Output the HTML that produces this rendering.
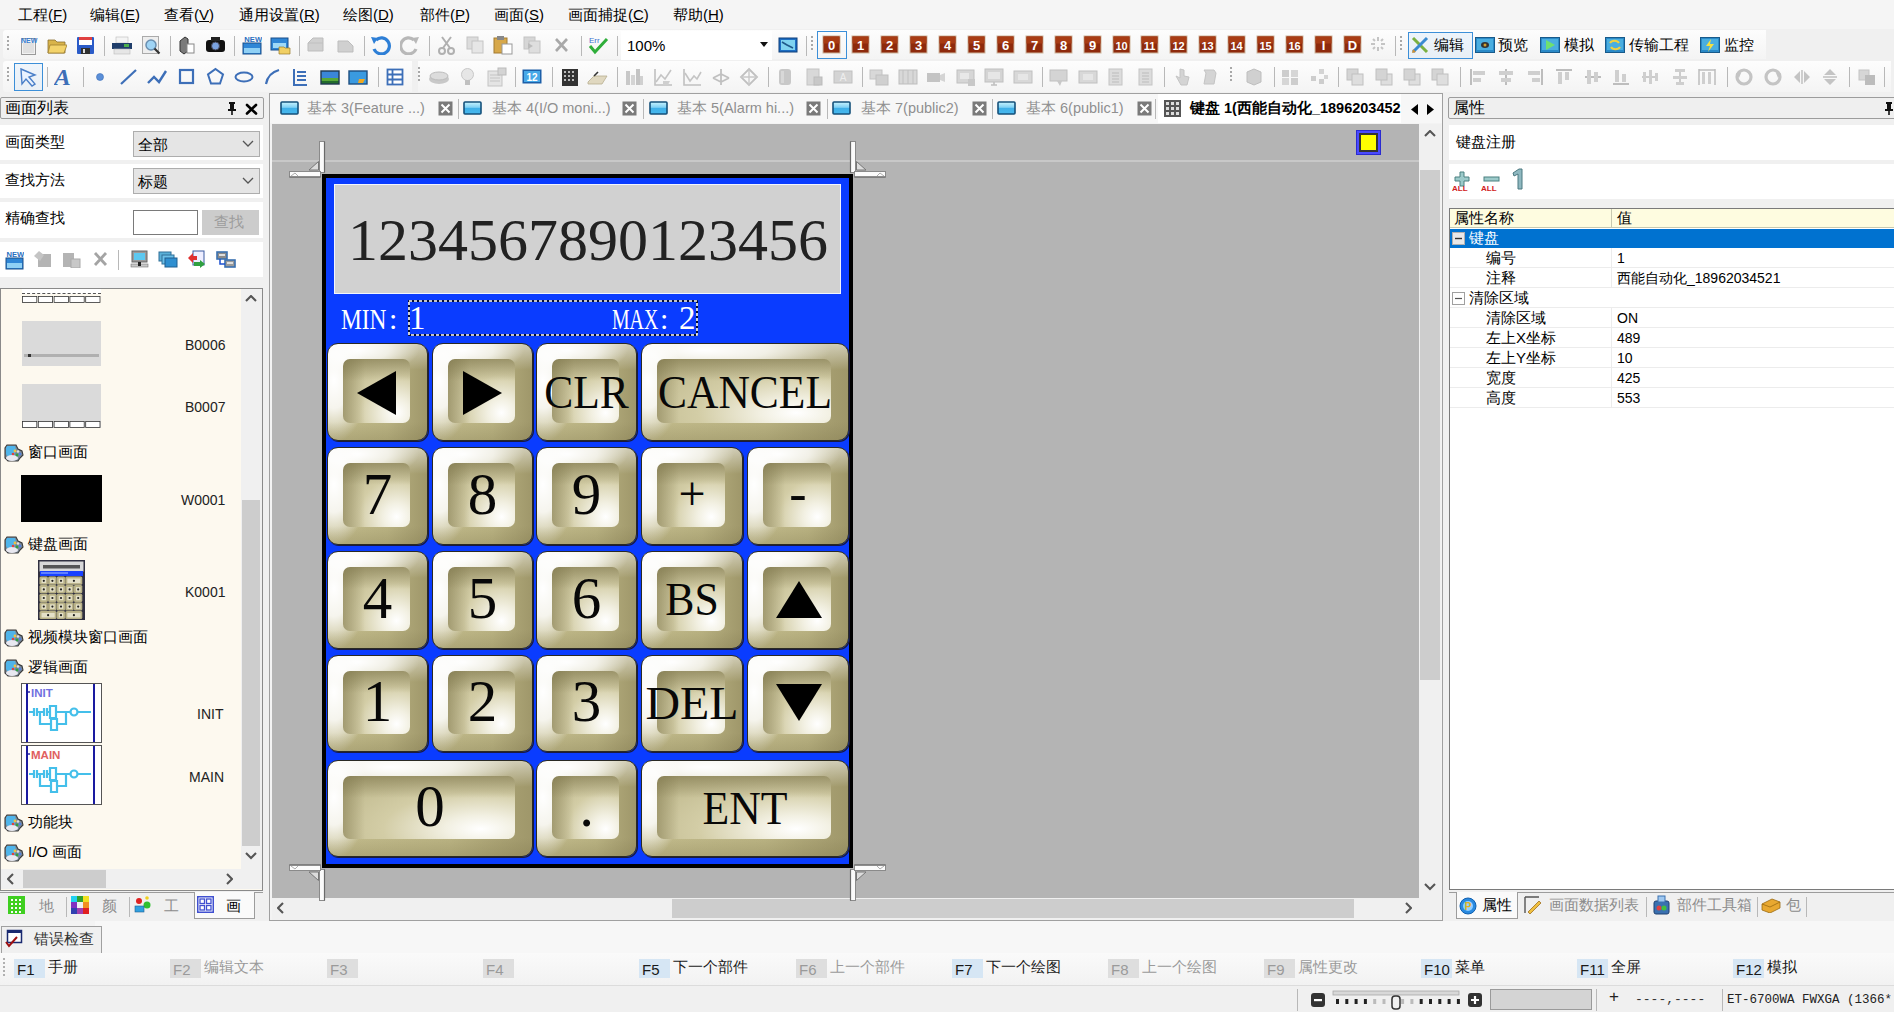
<!DOCTYPE html><html><head><meta charset="utf-8"><title>HMI</title><style>
*{box-sizing:border-box;margin:0;padding:0}
html,body{width:1894px;height:1012px;overflow:hidden;background:#f0f0f0;font-family:"Liberation Sans",sans-serif;color:#000}
.a{position:absolute}
.t{position:absolute;white-space:nowrap;font-size:14px;line-height:16px}
.serif{font-family:"Liberation Serif",serif}
.sep{position:absolute;width:1px;background:#b8b8b8}
.key{position:absolute;border:1.5px solid #2a2a24;border-radius:11px;box-shadow:1px 1px 0 #1a1a40;
 background:linear-gradient(0deg,rgba(110,102,60,.22) 0,rgba(110,102,60,0) 18px),
 radial-gradient(ellipse 34px 62px at 6px 38%,rgba(255,255,255,1) 0%,rgba(255,255,255,.85) 45%,rgba(255,255,255,0) 100%),
 radial-gradient(ellipse 62% 24px at 30% 6px,rgba(255,255,255,1) 0%,rgba(255,255,255,.7) 50%,rgba(255,255,255,0) 100%),
 linear-gradient(180deg,rgba(255,255,255,.5) 0,rgba(255,255,255,0) 26px),
 linear-gradient(90deg,#c2bb8c 0%,#b9b282 60%,#9f976a 100%)}
.key .in{position:absolute;border-radius:7px;
 background:linear-gradient(180deg,rgba(125,117,75,.6) 0,rgba(125,117,75,0) 22px),
 linear-gradient(90deg,rgba(125,117,75,.5) 0,rgba(125,117,75,0) 22px),
 radial-gradient(farthest-corner at 80% 84%,#ffffff 0%,#f2f0e2 18%,#d3cda6 50%,#b8b184 100%)}
.key .lb{position:absolute;left:0;right:0;text-align:center;font-family:"Liberation Serif",serif;color:#080808}
</style></head><body>
<div class="a" style="left:0;top:0;width:1894px;height:29px;background:#f5f5f5"></div>
<div class="t" style="left:18px;top:6px;font-size:15px;line-height:18px">工程(<u>F</u>)</div>
<div class="t" style="left:90px;top:6px;font-size:15px;line-height:18px">编辑(<u>E</u>)</div>
<div class="t" style="left:164px;top:6px;font-size:15px;line-height:18px">查看(<u>V</u>)</div>
<div class="t" style="left:239px;top:6px;font-size:15px;line-height:18px">通用设置(<u>R</u>)</div>
<div class="t" style="left:343px;top:6px;font-size:15px;line-height:18px">绘图(<u>D</u>)</div>
<div class="t" style="left:420px;top:6px;font-size:15px;line-height:18px">部件(<u>P</u>)</div>
<div class="t" style="left:494px;top:6px;font-size:15px;line-height:18px">画面(<u>S</u>)</div>
<div class="t" style="left:568px;top:6px;font-size:15px;line-height:18px">画面捕捉(<u>C</u>)</div>
<div class="t" style="left:673px;top:6px;font-size:15px;line-height:18px">帮助(<u>H</u>)</div>
<div class="a" style="left:3px;top:30px;width:1407px;height:29px;border-radius:3px 0 0 3px;background:linear-gradient(#fdfdfd,#f4f4f4)"></div>
<div class="a" style="left:1396px;top:30px;width:370px;height:29px;background:linear-gradient(#fdfdfd,#f4f4f4)"></div>
<div class="a" style="left:3px;top:61px;width:1888px;height:31px;border-radius:3px 0 0 3px;background:linear-gradient(#fdfdfd,#f4f4f4)"></div>
<div class="a" style="left:7px;top:36px;width:2px;height:2px;background:#a8a8a8"></div>
<div class="a" style="left:7px;top:40px;width:2px;height:2px;background:#a8a8a8"></div>
<div class="a" style="left:7px;top:44px;width:2px;height:2px;background:#a8a8a8"></div>
<div class="a" style="left:7px;top:48px;width:2px;height:2px;background:#a8a8a8"></div>
<div class="a" style="left:7px;top:67px;width:2px;height:2px;background:#a8a8a8"></div>
<div class="a" style="left:7px;top:71px;width:2px;height:2px;background:#a8a8a8"></div>
<div class="a" style="left:7px;top:75px;width:2px;height:2px;background:#a8a8a8"></div>
<div class="a" style="left:7px;top:79px;width:2px;height:2px;background:#a8a8a8"></div>
<div class="sep" style="left:104px;top:36px;height:20px"></div>
<div class="sep" style="left:170px;top:36px;height:20px"></div>
<div class="sep" style="left:234px;top:36px;height:20px"></div>
<div class="sep" style="left:299px;top:36px;height:20px"></div>
<div class="sep" style="left:364px;top:36px;height:20px"></div>
<div class="sep" style="left:429px;top:36px;height:20px"></div>
<div class="sep" style="left:581px;top:36px;height:20px"></div>
<div class="sep" style="left:617px;top:36px;height:20px"></div>
<div class="sep" style="left:806px;top:36px;height:20px"></div>
<div class="sep" style="left:47px;top:67px;height:20px"></div>
<div class="sep" style="left:83px;top:67px;height:20px"></div>
<div class="sep" style="left:378px;top:67px;height:20px"></div>
<div class="sep" style="left:515px;top:67px;height:20px"></div>
<div class="sep" style="left:552px;top:67px;height:20px"></div>
<div class="sep" style="left:617px;top:67px;height:20px"></div>
<div class="sep" style="left:768px;top:67px;height:20px"></div>
<div class="sep" style="left:862px;top:67px;height:20px"></div>
<div class="sep" style="left:1042px;top:67px;height:20px"></div>
<div class="sep" style="left:1164px;top:67px;height:20px"></div>
<div class="sep" style="left:1274px;top:67px;height:20px"></div>
<div class="sep" style="left:1338px;top:67px;height:20px"></div>
<div class="sep" style="left:1460px;top:67px;height:20px"></div>
<div class="sep" style="left:1727px;top:67px;height:20px"></div>
<div class="sep" style="left:1849px;top:67px;height:20px"></div>
<div class="sep" style="left:1884px;top:67px;height:20px"></div>
<div class="a" style="left:811px;top:36px;width:2px;height:2px;background:#a8a8a8"></div>
<div class="a" style="left:811px;top:40px;width:2px;height:2px;background:#a8a8a8"></div>
<div class="a" style="left:811px;top:44px;width:2px;height:2px;background:#a8a8a8"></div>
<div class="a" style="left:811px;top:48px;width:2px;height:2px;background:#a8a8a8"></div>
<div class="a" style="left:1400px;top:36px;width:2px;height:2px;background:#a8a8a8"></div>
<div class="a" style="left:1400px;top:40px;width:2px;height:2px;background:#a8a8a8"></div>
<div class="a" style="left:1400px;top:44px;width:2px;height:2px;background:#a8a8a8"></div>
<div class="a" style="left:1400px;top:48px;width:2px;height:2px;background:#a8a8a8"></div>
<div class="a" style="left:418px;top:67px;width:2px;height:2px;background:#a8a8a8"></div>
<div class="a" style="left:418px;top:71px;width:2px;height:2px;background:#a8a8a8"></div>
<div class="a" style="left:418px;top:75px;width:2px;height:2px;background:#a8a8a8"></div>
<div class="a" style="left:418px;top:79px;width:2px;height:2px;background:#a8a8a8"></div>
<div class="a" style="left:1230px;top:67px;width:2px;height:2px;background:#a8a8a8"></div>
<div class="a" style="left:1230px;top:71px;width:2px;height:2px;background:#a8a8a8"></div>
<div class="a" style="left:1230px;top:75px;width:2px;height:2px;background:#a8a8a8"></div>
<div class="a" style="left:1230px;top:79px;width:2px;height:2px;background:#a8a8a8"></div>
<svg class="a" style="left:19px;top:35px" width="20" height="20" viewBox="0 0 20 20"><rect x="2.5" y="3.5" width="14" height="16" fill="#f2f2f2" stroke="#9a9a9a"/><rect x="4" y="8" width="11" height="10" fill="#e0e0e0"/><text x="2" y="7.5" font-size="7" font-weight="bold" fill="#3a7fd0" font-family="Liberation Sans">NEW</text></svg>
<svg class="a" style="left:47px;top:35px" width="20" height="20" viewBox="0 0 20 20"><path d="M1 5h7l2 2h8v11H1z" fill="#d9b44a" stroke="#8a7030" stroke-width=".8"/><path d="M3 10h17l-3 8H1z" fill="#f3d36b" stroke="#a08030" stroke-width=".8"/></svg>
<svg class="a" style="left:76px;top:35px" width="19" height="20" viewBox="0 0 19 20"><rect x="1" y="2" width="17" height="17" rx="1" fill="#2a5bc8"/><rect x="3" y="2" width="13" height="3" fill="#e04040"/><rect x="3" y="5" width="13" height="5" fill="#ffffff"/><rect x="5" y="13" width="9" height="6" fill="#303030"/><rect x="7" y="14" width="2" height="4" fill="#ddd"/></svg>
<svg class="a" style="left:111px;top:35px" width="22" height="20" viewBox="0 0 22 20"><rect x="5" y="2" width="12" height="6" fill="#f4f4f4" stroke="#bbb" stroke-width=".6"/><rect x="1" y="8" width="20" height="6" fill="#1f3d6a"/><rect x="13" y="9" width="5" height="3" fill="#4cae4c"/><rect x="3" y="14" width="16" height="5" fill="#e6e6e6" stroke="#bbb" stroke-width=".6"/></svg>
<svg class="a" style="left:141px;top:35px" width="20" height="20" viewBox="0 0 20 20"><rect x="1.5" y="1.5" width="16" height="17" fill="#eee" stroke="#aaa"/><circle cx="10" cy="10" r="5" fill="#9fd4f5" stroke="#6a8fb0" stroke-width="1.5"/><path d="M13.5 13.5l5 5" stroke="#333" stroke-width="2.2"/></svg>
<svg class="a" style="left:178px;top:35px" width="18" height="20" viewBox="0 0 18 20"><path d="M2 6l5-4 3 2v12l-4 3-4-3z" fill="#7a7a7a" stroke="#333" stroke-width="1"/><rect x="9" y="9" width="7" height="9" fill="#fff" stroke="#888"/></svg>
<svg class="a" style="left:205px;top:35px" width="21" height="20" viewBox="0 0 21 20"><rect x="1" y="5" width="19" height="12" rx="3" fill="#111"/><rect x="6" y="2" width="9" height="4" fill="#222"/><circle cx="10.5" cy="11" r="4" fill="#7aa2e0" stroke="#445" stroke-width="1"/></svg>
<svg class="a" style="left:242px;top:35px" width="20" height="20" viewBox="0 0 20 20"><rect x="1" y="8" width="18" height="11" fill="#2f86d6" stroke="#1a4f8a"/><rect x="2" y="13" width="16" height="5" fill="#8fd0f5"/><text x="2.5" y="7.5" font-size="8" font-weight="bold" fill="#2a6fc0" font-family="Liberation Sans" transform="scale(.95,1)">NEW</text></svg>
<svg class="a" style="left:270px;top:35px" width="21" height="20" viewBox="0 0 21 20"><rect x="1" y="3" width="17" height="12" fill="#2f86d6" stroke="#1a4f8a"/><rect x="3" y="8" width="13" height="5" fill="#9fd9f7"/><path d="M9 12h5l1 1h5v6H9z" fill="#f1cf63" stroke="#9a7a2a" stroke-width=".7"/></svg>
<svg class="a" style="left:306px;top:35px" width="20" height="20" viewBox="0 0 20 20"><path d="M2 8l5-5h10v13H2z" fill="#d0d0d0" stroke="#bdbdbd"/><path d="M2 8h15" stroke="#c0c0c0"/></svg>
<svg class="a" style="left:336px;top:35px" width="20" height="20" viewBox="0 0 20 20"><path d="M2 6h10l5 5v6H2z" fill="#d0d0d0" stroke="#bdbdbd"/></svg>
<svg class="a" style="left:370px;top:35px" width="22" height="20" viewBox="0 0 22 20"><path d="M6 5a8 8 0 1 1-2 9" fill="none" stroke="#2e7fd6" stroke-width="3.2"/><path d="M1 2l7 1-4 6z" fill="#2e7fd6"/></svg>
<svg class="a" style="left:400px;top:35px" width="20" height="20" viewBox="0 0 20 20"><path d="M14 5a8 8 0 1 0 2 9" fill="none" stroke="#b8b8b8" stroke-width="3.2"/><path d="M19 2l-7 1 4 6z" fill="#b8b8b8"/></svg>
<svg class="a" style="left:437px;top:35px" width="19" height="20" viewBox="0 0 19 20"><path d="M5 2l8 11M14 2l-8 11" stroke="#b0b0b0" stroke-width="2"/><circle cx="5" cy="16" r="3" fill="none" stroke="#b0b0b0" stroke-width="2"/><circle cx="14" cy="16" r="3" fill="none" stroke="#b0b0b0" stroke-width="2"/></svg>
<svg class="a" style="left:465px;top:35px" width="20" height="20" viewBox="0 0 20 20"><rect x="2" y="2" width="11" height="12" fill="#dcdcdc" stroke="#c4c4c4"/><rect x="7" y="6" width="11" height="12" fill="#e6e6e6" stroke="#c4c4c4"/></svg>
<svg class="a" style="left:493px;top:35px" width="21" height="20" viewBox="0 0 21 20"><rect x="1" y="3" width="13" height="15" fill="#d7a84a" stroke="#a27a30"/><rect x="4" y="1" width="7" height="4" fill="#888"/><rect x="9" y="9" width="10" height="10" fill="#fff" stroke="#999"/></svg>
<svg class="a" style="left:522px;top:35px" width="20" height="20" viewBox="0 0 20 20"><rect x="2" y="2" width="11" height="12" fill="#d6d6d6" stroke="#c4c4c4"/><rect x="7" y="6" width="11" height="12" fill="#dedede" stroke="#c4c4c4"/><path d="M6 8l5 3-5 3z" fill="#bbb"/></svg>
<svg class="a" style="left:553px;top:35px" width="17" height="20" viewBox="0 0 17 20"><path d="M3 4l11 12M14 4L3 16" stroke="#a8a8a8" stroke-width="2.6"/></svg>
<svg class="a" style="left:588px;top:35px" width="21" height="20" viewBox="0 0 21 20"><text x="1" y="8" font-size="8" fill="#3a6fd0" font-family="Liberation Sans">Err</text><path d="M2 11l5 6 12-13" fill="none" stroke="#2fae3a" stroke-width="3"/></svg>
<div class="a" style="left:621px;top:31px;width:151px;height:29px;background:#fff"></div>
<div class="t" style="left:627px;top:38px;font-size:15px">100%</div>
<svg class="a" style="left:760px;top:42px" width="8" height="5" viewBox="0 0 8 5"><path d="M0 0h8L4 5z" fill="#111"/></svg>
<svg class="a" style="left:778px;top:35px" width="20" height="20" viewBox="0 0 20 20"><rect x="1" y="3" width="18" height="14" fill="#1d6fc4" stroke="#0f3f7a"/><rect x="3" y="5" width="14" height="10" fill="#7fd3f0"/><path d="M4 7l5 3 6 3" stroke="#1f5a8a" stroke-width="1.6"/></svg>
<svg class="a" style="left:822px;top:35px" width="19" height="19" viewBox="0 0 19 19"><rect x=".5" y=".5" width="18" height="18" fill="#cdb59c"/><rect x="1.5" y="1.5" width="16" height="16" fill="#8e2a0c"/><rect x="1.5" y="1.5" width="16" height="7" fill="#a83c14"/><text x="9.5" y="15" text-anchor="middle" font-size="13" font-weight="bold" fill="#fff" font-family="Liberation Sans">0</text></svg>
<svg class="a" style="left:851px;top:35px" width="19" height="19" viewBox="0 0 19 19"><rect x=".5" y=".5" width="18" height="18" fill="#cdb59c"/><rect x="1.5" y="1.5" width="16" height="16" fill="#8e2a0c"/><rect x="1.5" y="1.5" width="16" height="7" fill="#a83c14"/><text x="9.5" y="15" text-anchor="middle" font-size="13" font-weight="bold" fill="#fff" font-family="Liberation Sans">1</text></svg>
<svg class="a" style="left:880px;top:35px" width="19" height="19" viewBox="0 0 19 19"><rect x=".5" y=".5" width="18" height="18" fill="#cdb59c"/><rect x="1.5" y="1.5" width="16" height="16" fill="#8e2a0c"/><rect x="1.5" y="1.5" width="16" height="7" fill="#a83c14"/><text x="9.5" y="15" text-anchor="middle" font-size="13" font-weight="bold" fill="#fff" font-family="Liberation Sans">2</text></svg>
<svg class="a" style="left:909px;top:35px" width="19" height="19" viewBox="0 0 19 19"><rect x=".5" y=".5" width="18" height="18" fill="#cdb59c"/><rect x="1.5" y="1.5" width="16" height="16" fill="#8e2a0c"/><rect x="1.5" y="1.5" width="16" height="7" fill="#a83c14"/><text x="9.5" y="15" text-anchor="middle" font-size="13" font-weight="bold" fill="#fff" font-family="Liberation Sans">3</text></svg>
<svg class="a" style="left:938px;top:35px" width="19" height="19" viewBox="0 0 19 19"><rect x=".5" y=".5" width="18" height="18" fill="#cdb59c"/><rect x="1.5" y="1.5" width="16" height="16" fill="#8e2a0c"/><rect x="1.5" y="1.5" width="16" height="7" fill="#a83c14"/><text x="9.5" y="15" text-anchor="middle" font-size="13" font-weight="bold" fill="#fff" font-family="Liberation Sans">4</text></svg>
<svg class="a" style="left:967px;top:35px" width="19" height="19" viewBox="0 0 19 19"><rect x=".5" y=".5" width="18" height="18" fill="#cdb59c"/><rect x="1.5" y="1.5" width="16" height="16" fill="#8e2a0c"/><rect x="1.5" y="1.5" width="16" height="7" fill="#a83c14"/><text x="9.5" y="15" text-anchor="middle" font-size="13" font-weight="bold" fill="#fff" font-family="Liberation Sans">5</text></svg>
<svg class="a" style="left:996px;top:35px" width="19" height="19" viewBox="0 0 19 19"><rect x=".5" y=".5" width="18" height="18" fill="#cdb59c"/><rect x="1.5" y="1.5" width="16" height="16" fill="#8e2a0c"/><rect x="1.5" y="1.5" width="16" height="7" fill="#a83c14"/><text x="9.5" y="15" text-anchor="middle" font-size="13" font-weight="bold" fill="#fff" font-family="Liberation Sans">6</text></svg>
<svg class="a" style="left:1025px;top:35px" width="19" height="19" viewBox="0 0 19 19"><rect x=".5" y=".5" width="18" height="18" fill="#cdb59c"/><rect x="1.5" y="1.5" width="16" height="16" fill="#8e2a0c"/><rect x="1.5" y="1.5" width="16" height="7" fill="#a83c14"/><text x="9.5" y="15" text-anchor="middle" font-size="13" font-weight="bold" fill="#fff" font-family="Liberation Sans">7</text></svg>
<svg class="a" style="left:1054px;top:35px" width="19" height="19" viewBox="0 0 19 19"><rect x=".5" y=".5" width="18" height="18" fill="#cdb59c"/><rect x="1.5" y="1.5" width="16" height="16" fill="#8e2a0c"/><rect x="1.5" y="1.5" width="16" height="7" fill="#a83c14"/><text x="9.5" y="15" text-anchor="middle" font-size="13" font-weight="bold" fill="#fff" font-family="Liberation Sans">8</text></svg>
<svg class="a" style="left:1083px;top:35px" width="19" height="19" viewBox="0 0 19 19"><rect x=".5" y=".5" width="18" height="18" fill="#cdb59c"/><rect x="1.5" y="1.5" width="16" height="16" fill="#8e2a0c"/><rect x="1.5" y="1.5" width="16" height="7" fill="#a83c14"/><text x="9.5" y="15" text-anchor="middle" font-size="13" font-weight="bold" fill="#fff" font-family="Liberation Sans">9</text></svg>
<svg class="a" style="left:1112px;top:35px" width="19" height="19" viewBox="0 0 19 19"><rect x=".5" y=".5" width="18" height="18" fill="#cdb59c"/><rect x="1.5" y="1.5" width="16" height="16" fill="#8e2a0c"/><rect x="1.5" y="1.5" width="16" height="7" fill="#a83c14"/><text x="9.5" y="15" text-anchor="middle" font-size="11" font-weight="bold" fill="#fff" font-family="Liberation Sans">10</text></svg>
<svg class="a" style="left:1140px;top:35px" width="19" height="19" viewBox="0 0 19 19"><rect x=".5" y=".5" width="18" height="18" fill="#cdb59c"/><rect x="1.5" y="1.5" width="16" height="16" fill="#8e2a0c"/><rect x="1.5" y="1.5" width="16" height="7" fill="#a83c14"/><text x="9.5" y="15" text-anchor="middle" font-size="11" font-weight="bold" fill="#fff" font-family="Liberation Sans">11</text></svg>
<svg class="a" style="left:1169px;top:35px" width="19" height="19" viewBox="0 0 19 19"><rect x=".5" y=".5" width="18" height="18" fill="#cdb59c"/><rect x="1.5" y="1.5" width="16" height="16" fill="#8e2a0c"/><rect x="1.5" y="1.5" width="16" height="7" fill="#a83c14"/><text x="9.5" y="15" text-anchor="middle" font-size="11" font-weight="bold" fill="#fff" font-family="Liberation Sans">12</text></svg>
<svg class="a" style="left:1198px;top:35px" width="19" height="19" viewBox="0 0 19 19"><rect x=".5" y=".5" width="18" height="18" fill="#cdb59c"/><rect x="1.5" y="1.5" width="16" height="16" fill="#8e2a0c"/><rect x="1.5" y="1.5" width="16" height="7" fill="#a83c14"/><text x="9.5" y="15" text-anchor="middle" font-size="11" font-weight="bold" fill="#fff" font-family="Liberation Sans">13</text></svg>
<svg class="a" style="left:1227px;top:35px" width="19" height="19" viewBox="0 0 19 19"><rect x=".5" y=".5" width="18" height="18" fill="#cdb59c"/><rect x="1.5" y="1.5" width="16" height="16" fill="#8e2a0c"/><rect x="1.5" y="1.5" width="16" height="7" fill="#a83c14"/><text x="9.5" y="15" text-anchor="middle" font-size="11" font-weight="bold" fill="#fff" font-family="Liberation Sans">14</text></svg>
<svg class="a" style="left:1256px;top:35px" width="19" height="19" viewBox="0 0 19 19"><rect x=".5" y=".5" width="18" height="18" fill="#cdb59c"/><rect x="1.5" y="1.5" width="16" height="16" fill="#8e2a0c"/><rect x="1.5" y="1.5" width="16" height="7" fill="#a83c14"/><text x="9.5" y="15" text-anchor="middle" font-size="11" font-weight="bold" fill="#fff" font-family="Liberation Sans">15</text></svg>
<svg class="a" style="left:1285px;top:35px" width="19" height="19" viewBox="0 0 19 19"><rect x=".5" y=".5" width="18" height="18" fill="#cdb59c"/><rect x="1.5" y="1.5" width="16" height="16" fill="#8e2a0c"/><rect x="1.5" y="1.5" width="16" height="7" fill="#a83c14"/><text x="9.5" y="15" text-anchor="middle" font-size="11" font-weight="bold" fill="#fff" font-family="Liberation Sans">16</text></svg>
<svg class="a" style="left:1314px;top:35px" width="19" height="19" viewBox="0 0 19 19"><rect x=".5" y=".5" width="18" height="18" fill="#cdb59c"/><rect x="1.5" y="1.5" width="16" height="16" fill="#8e2a0c"/><rect x="1.5" y="1.5" width="16" height="7" fill="#a83c14"/><text x="9.5" y="15" text-anchor="middle" font-size="13" font-weight="bold" fill="#fff" font-family="Liberation Sans">I</text></svg>
<svg class="a" style="left:1343px;top:35px" width="19" height="19" viewBox="0 0 19 19"><rect x=".5" y=".5" width="18" height="18" fill="#cdb59c"/><rect x="1.5" y="1.5" width="16" height="16" fill="#8e2a0c"/><rect x="1.5" y="1.5" width="16" height="7" fill="#a83c14"/><text x="9.5" y="15" text-anchor="middle" font-size="13" font-weight="bold" fill="#fff" font-family="Liberation Sans">D</text></svg>
<div class="a" style="left:817px;top:31px;width:30px;height:28px;border:1px solid #3c8fd8"></div>
<svg class="a" style="left:1370px;top:36px" width="16" height="16" viewBox="0 0 16 16"><g stroke="#c4c4c4" stroke-width="2"><path d="M8 1v4M8 11v4M1 8h4M11 8h4M3 3l2 2M11 11l2 2M13 3l-2 2M3 13l2-2"/></g></svg>
<div class="sep" style="left:1395px;top:36px;height:20px"></div>
<div class="a" style="left:1408px;top:32px;width:65px;height:27px;border:1px solid #3c8fd8;background:rgba(210,230,250,.35)"></div>
<svg class="a" style="left:1410px;top:35px" width="20" height="20" viewBox="0 0 20 20"><path d="M3 3l14 14" stroke="#7ab040" stroke-width="3"/><path d="M17 3L3 17" stroke="#3a8ad0" stroke-width="3"/><path d="M2 18l4-1-3-3z" fill="#d09030"/></svg>
<div class="t" style="left:1434px;top:37px;font-size:15px">编辑</div>
<svg class="a" style="left:1475px;top:36px" width="20" height="18" viewBox="0 0 20 18"><rect x=".5" y="1.5" width="19" height="15" fill="#2a8ac8" stroke="#185a8a"/><rect x="2" y="3" width="16" height="11" fill="#4aaee0"/><ellipse cx="10" cy="9" rx="4" ry="3" fill="#333"/><circle cx="10" cy="9" r="1.5" fill="#d0a030"/></svg>
<div class="t" style="left:1498px;top:37px;font-size:15px">预览</div>
<svg class="a" style="left:1540px;top:36px" width="20" height="18" viewBox="0 0 20 18"><rect x=".5" y="1.5" width="19" height="15" fill="#2a8ac8" stroke="#185a8a"/><rect x="2" y="3" width="16" height="11" fill="#4aaee0"/><path d="M6 4l9 5-9 5z" fill="#6fe070"/></svg>
<div class="t" style="left:1564px;top:37px;font-size:15px">模拟</div>
<svg class="a" style="left:1605px;top:36px" width="20" height="18" viewBox="0 0 20 18"><rect x=".5" y="1.5" width="19" height="15" fill="#2a8ac8" stroke="#185a8a"/><rect x="2" y="3" width="16" height="11" fill="#4aaee0"/><path d="M5 7a5 4 0 0 1 9 0M15 11a5 4 0 0 1-9 0" fill="none" stroke="#f0d040" stroke-width="2"/></svg>
<div class="t" style="left:1629px;top:37px;font-size:15px">传输工程</div>
<svg class="a" style="left:1700px;top:36px" width="20" height="18" viewBox="0 0 20 18"><rect x=".5" y="1.5" width="19" height="15" fill="#2a8ac8" stroke="#185a8a"/><rect x="2" y="3" width="16" height="11" fill="#4aaee0"/><path d="M11 3l-5 7h4l-2 6 6-8h-4z" fill="#f5e040"/></svg>
<div class="t" style="left:1724px;top:37px;font-size:15px">监控</div>
<div class="a" style="left:14px;top:63px;width:29px;height:28px;border:1px solid #3c8fd8;background:rgba(210,230,250,.3)"></div>
<svg class="a" style="left:19px;top:67px" width="20" height="20" viewBox="0 0 20 20"><path d="M2 2l14 6-6 2 6 7-3 2-6-7-4 5z" fill="#eaf3ff" stroke="#4a7fc8" stroke-width="1.4"/></svg>
<svg class="a" style="left:54px;top:67px" width="20" height="20" viewBox="0 0 20 20"><text x="0" y="18" font-size="24" font-style="italic" font-weight="bold" fill="#3d6fb8" font-family="Liberation Serif" transform="scale(1.05,1)">A</text></svg>
<svg class="a" style="left:94px;top:67px" width="12" height="20" viewBox="0 0 12 20"><circle cx="6" cy="10" r="3.5" fill="#5b8fd8" stroke="#3d6fb8" stroke-width=".6"/></svg>
<svg class="a" style="left:119px;top:67px" width="20" height="20" viewBox="0 0 20 20"><path d="M2 17L17 3" stroke="#3d6fb8" stroke-width="2.2"/></svg>
<svg class="a" style="left:147px;top:67px" width="21" height="20" viewBox="0 0 21 20"><path d="M1 16l6-6 5 5 7-11" fill="none" stroke="#3d6fb8" stroke-width="2.4"/></svg>
<svg class="a" style="left:178px;top:67px" width="17" height="20" viewBox="0 0 17 20"><rect x="2" y="3" width="13" height="13" fill="none" stroke="#3d6fb8" stroke-width="2.2"/></svg>
<svg class="a" style="left:206px;top:67px" width="19" height="20" viewBox="0 0 19 20"><path d="M9.5 2l7.5 5.5-3 9h-9l-3-9z" fill="none" stroke="#3d6fb8" stroke-width="2"/></svg>
<svg class="a" style="left:234px;top:67px" width="20" height="20" viewBox="0 0 20 20"><ellipse cx="10" cy="10" rx="8.5" ry="4.5" fill="none" stroke="#3d6fb8" stroke-width="2"/></svg>
<svg class="a" style="left:264px;top:67px" width="17" height="20" viewBox="0 0 17 20"><path d="M2 17Q4 6 15 3" fill="none" stroke="#3d6fb8" stroke-width="2.2"/></svg>
<svg class="a" style="left:291px;top:67px" width="18" height="20" viewBox="0 0 18 20"><path d="M3 2v16h13M6 5h9M6 9h9M6 13h9" fill="none" stroke="#3d6fb8" stroke-width="2"/></svg>
<svg class="a" style="left:320px;top:67px" width="20" height="20" viewBox="0 0 20 20"><rect x="1" y="4" width="18" height="13" fill="#226b2c"/><rect x="1" y="4" width="18" height="7" fill="#3a86d8"/><rect x="1" y="11" width="18" height="3" fill="#58a838"/><rect x="1" y="4" width="18" height="13" fill="none" stroke="#203850" stroke-width="1.4"/></svg>
<svg class="a" style="left:348px;top:67px" width="21" height="20" viewBox="0 0 21 20"><rect x="1" y="4" width="18" height="13" fill="#3a9ae0" stroke="#1f4f80" stroke-width="1.4"/><path d="M11 12h6l-2 4h-5z" fill="#f0a820"/></svg>
<svg class="a" style="left:386px;top:67px" width="18" height="20" viewBox="0 0 18 20"><rect x="1.5" y="2.5" width="15" height="15" fill="#fff" stroke="#3d6fb8" stroke-width="1.8"/><path d="M1.5 7.5h15M1.5 12.5h15M6.5 2.5v15" stroke="#3d6fb8" stroke-width="1.8"/></svg>
<div class="a" style="left:412px;top:61px;width:6px;height:31px;background:#f0f0f0"></div>
<svg class="a" style="left:428px;top:68px" width="22" height="18" viewBox="0 0 22 18"><ellipse cx="11" cy="11" rx="10" ry="5" fill="#c8c8c8"/><ellipse cx="11" cy="8" rx="9" ry="4" fill="#dcdcdc" stroke="#bcbcbc"/></svg>
<svg class="a" style="left:460px;top:67px" width="15" height="20" viewBox="0 0 15 20"><circle cx="7.5" cy="7.5" r="6" fill="#e6e6e6" stroke="#c8c8c8"/><rect x="5" y="13" width="5" height="5" fill="#c0c0c0"/></svg>
<svg class="a" style="left:487px;top:67px" width="20" height="20" viewBox="0 0 20 20"><rect x="1" y="4" width="14" height="15" fill="#e4e4e4" stroke="#c4c4c4"/><path d="M3 8h10M3 11h10M3 14h10" stroke="#c4c4c4"/><rect x="11" y="1" width="8" height="7" fill="#d4d4d4" stroke="#bbb"/></svg>
<svg class="a" style="left:522px;top:68px" width="20" height="18" viewBox="0 0 20 18"><rect x=".5" y="1.5" width="19" height="14" fill="#1c5fa8"/><rect x="2" y="3" width="16" height="11" fill="#46a8e8"/><text x="10" y="13" text-anchor="middle" font-size="10" font-weight="bold" fill="#fff" font-family="Liberation Sans">12</text></svg>
<svg class="a" style="left:561px;top:67px" width="18" height="20" viewBox="0 0 18 20"><rect x="1" y="2" width="16" height="17" fill="#333"/><g fill="#bbb"><rect x="3" y="4" width="2" height="2"/><rect x="7" y="4" width="2" height="2"/><rect x="11" y="4" width="2" height="2"/><rect x="3" y="8" width="2" height="2"/><rect x="7" y="8" width="2" height="2"/><rect x="11" y="8" width="2" height="2"/><rect x="3" y="12" width="2" height="2"/><rect x="7" y="12" width="2" height="2"/><rect x="11" y="12" width="2" height="2"/></g></svg>
<svg class="a" style="left:587px;top:67px" width="21" height="20" viewBox="0 0 21 20"><path d="M1 15l6-6h13l-5 8H1z" fill="#e0d8c0" stroke="#b8ae90" stroke-width=".8"/><path d="M7 9l4-4" stroke="#333" stroke-width="1.6"/></svg>
<svg class="a" style="left:624px;top:67px" width="20" height="20" viewBox="0 0 20 20"><rect x="2" y="4" width="4" height="14" fill="#c8c8c8"/><rect x="7" y="8" width="4" height="10" fill="#d4d4d4"/><rect x="12" y="2" width="4" height="16" fill="#c4c4c4"/><rect x="16" y="9" width="3" height="9" fill="#d0d0d0"/></svg>
<svg class="a" style="left:653px;top:67px" width="20" height="20" viewBox="0 0 20 20"><path d="M2 2v16h17" fill="none" stroke="#c0c0c0" stroke-width="1.6"/><path d="M3 15l5-7 4 4 6-9" fill="none" stroke="#c4c4c4" stroke-width="1.6"/><path d="M10 14h7l-2 4h-5z" fill="#cfcfcf"/></svg>
<svg class="a" style="left:682px;top:67px" width="20" height="20" viewBox="0 0 20 20"><path d="M2 2v16h17" fill="none" stroke="#c0c0c0" stroke-width="1.6"/><path d="M3 6l5 8 4-5 3 3 4-7" fill="none" stroke="#c4c4c4" stroke-width="1.6"/></svg>
<svg class="a" style="left:711px;top:67px" width="20" height="20" viewBox="0 0 20 20"><path d="M10 2v16M2 11l8-4 8 4M2 11l8 4 8-4" fill="none" stroke="#c0c0c0" stroke-width="1.8"/></svg>
<svg class="a" style="left:739px;top:67px" width="20" height="20" viewBox="0 0 20 20"><path d="M10 2l8 8-8 8-8-8z" fill="none" stroke="#c0c0c0" stroke-width="1.8"/><path d="M10 2v16M2 10h16" stroke="#c8c8c8" stroke-width="1.4"/></svg>
<svg class="a" style="left:775px;top:67px" width="20" height="20" viewBox="0 0 20 20"><rect x="4" y="2" width="12" height="16" rx="3" fill="#c8c8c8"/><rect x="6" y="4" width="3" height="12" fill="#d8d8d8"/></svg>
<svg class="a" style="left:805px;top:67px" width="20" height="20" viewBox="0 0 20 20"><rect x="2" y="2" width="12" height="16" fill="#d8d8d8" stroke="#c4c4c4"/><rect x="9" y="10" width="8" height="8" fill="#c8c8c8" stroke="#bbb"/></svg>
<svg class="a" style="left:833px;top:67px" width="20" height="20" viewBox="0 0 20 20"><rect x="1" y="4" width="18" height="12" fill="#d4d4d4" stroke="#c0c0c0"/><text x="10" y="14" text-anchor="middle" font-size="10" fill="#eee" font-family="Liberation Sans">A</text></svg>
<svg class="a" style="left:869px;top:67px" width="20" height="20" viewBox="0 0 20 20"><rect x="1" y="3" width="12" height="9" fill="#d8d8d8" stroke="#c4c4c4"/><rect x="7" y="8" width="12" height="10" fill="#d0d0d0" stroke="#c0c0c0"/></svg>
<svg class="a" style="left:898px;top:67px" width="20" height="20" viewBox="0 0 20 20"><rect x="1" y="3" width="18" height="14" fill="#d8d8d8" stroke="#bdbdbd"/><path d="M5 3v14M10 3v14M15 3v14" stroke="#c0c0c0"/></svg>
<svg class="a" style="left:926px;top:67px" width="20" height="20" viewBox="0 0 20 20"><rect x="1" y="6" width="13" height="9" fill="#c4c4c4"/><path d="M14 8l5-2v9l-5-2z" fill="#d4d4d4"/></svg>
<svg class="a" style="left:956px;top:67px" width="20" height="20" viewBox="0 0 20 20"><rect x="1" y="3" width="17" height="13" fill="#d6d6d6" stroke="#c0c0c0"/><rect x="4" y="6" width="9" height="6" fill="#e8e8e8"/><rect x="12" y="12" width="7" height="7" fill="#c8c8c8"/></svg>
<svg class="a" style="left:984px;top:67px" width="20" height="20" viewBox="0 0 20 20"><rect x="1" y="2" width="18" height="13" fill="#d4d4d4" stroke="#c0c0c0"/><rect x="4" y="5" width="12" height="7" fill="#e6e6e6"/><path d="M7 18h6M10 15v3" stroke="#c0c0c0" stroke-width="1.6"/></svg>
<svg class="a" style="left:1013px;top:67px" width="20" height="20" viewBox="0 0 20 20"><rect x="1" y="4" width="18" height="12" fill="#d8d8d8" stroke="#c0c0c0"/><rect x="5" y="7" width="10" height="6" fill="#e6e6e6"/></svg>
<svg class="a" style="left:1049px;top:67px" width="20" height="20" viewBox="0 0 20 20"><rect x="1" y="3" width="17" height="11" fill="#d4d4d4" stroke="#c0c0c0"/><path d="M8 14l3 5 2-5" fill="#c8c8c8"/></svg>
<svg class="a" style="left:1078px;top:67px" width="20" height="20" viewBox="0 0 20 20"><rect x="1" y="4" width="18" height="12" fill="#d8d8d8" stroke="#c0c0c0"/><rect x="5" y="7" width="10" height="6" fill="#e6e6e6"/></svg>
<svg class="a" style="left:1106px;top:67px" width="20" height="20" viewBox="0 0 20 20"><rect x="3" y="2" width="13" height="16" fill="#dcdcdc" stroke="#c4c4c4"/><path d="M6 6h7M6 9h7M6 12h7M6 15h7" stroke="#bcbcbc"/></svg>
<svg class="a" style="left:1136px;top:67px" width="20" height="20" viewBox="0 0 20 20"><rect x="3" y="2" width="13" height="16" fill="#dcdcdc" stroke="#c4c4c4"/><path d="M6 6h7M6 9h7M6 12h7M6 15h7" stroke="#bcbcbc"/></svg>
<svg class="a" style="left:1172px;top:67px" width="20" height="20" viewBox="0 0 20 20"><path d="M8 2v9l-4-2 5 9h6l2-8-5-1V3z" fill="#d4d4d4" stroke="#c4c4c4"/></svg>
<svg class="a" style="left:1200px;top:67px" width="20" height="20" viewBox="0 0 20 20"><path d="M4 3h10l2 3-2 11H4l2-11z" fill="#d4d4d4" stroke="#c4c4c4"/></svg>
<svg class="a" style="left:1244px;top:67px" width="20" height="20" viewBox="0 0 20 20"><path d="M3 5l7-3 7 3v10l-7 3-7-3z" fill="#d0d0d0" stroke="#bebebe"/></svg>
<svg class="a" style="left:1280px;top:67px" width="20" height="20" viewBox="0 0 20 20"><rect x="2" y="3" width="7" height="7" fill="#cdcdcd"/><rect x="11" y="3" width="7" height="7" fill="#d6d6d6"/><rect x="2" y="11" width="7" height="7" fill="#d6d6d6"/><rect x="11" y="11" width="7" height="7" fill="#cdcdcd"/></svg>
<svg class="a" style="left:1309px;top:67px" width="20" height="20" viewBox="0 0 20 20"><rect x="2" y="9" width="5" height="5" fill="#cdcdcd"/><rect x="10" y="2" width="5" height="5" fill="#d4d4d4"/><rect x="10" y="12" width="5" height="5" fill="#cdcdcd"/><rect x="15" y="8" width="4" height="4" fill="#d4d4d4"/></svg>
<svg class="a" style="left:1345px;top:67px" width="20" height="20" viewBox="0 0 20 20"><rect x="2" y="2" width="11" height="11" fill="#d4d4d4" stroke="#c0c0c0"/><rect x="7" y="7" width="11" height="11" fill="#dedede" stroke="#c0c0c0"/></svg>
<svg class="a" style="left:1374px;top:67px" width="20" height="20" viewBox="0 0 20 20"><rect x="7" y="7" width="11" height="11" fill="#dedede" stroke="#c0c0c0"/><rect x="2" y="2" width="11" height="11" fill="#d4d4d4" stroke="#c0c0c0"/></svg>
<svg class="a" style="left:1402px;top:67px" width="20" height="20" viewBox="0 0 20 20"><rect x="7" y="7" width="11" height="11" fill="#dedede" stroke="#c0c0c0"/><rect x="2" y="2" width="11" height="11" fill="#d4d4d4" stroke="#c0c0c0"/></svg>
<svg class="a" style="left:1430px;top:67px" width="20" height="20" viewBox="0 0 20 20"><rect x="2" y="2" width="11" height="11" fill="#d4d4d4" stroke="#c0c0c0"/><rect x="7" y="7" width="11" height="11" fill="#dedede" stroke="#c0c0c0"/></svg>
<svg class="a" style="left:1468px;top:67px" width="20" height="20" viewBox="0 0 20 20"><path d="M3 2v16" stroke="#bdbdbd" stroke-width="2"/><rect x="5" y="4" width="12" height="4" fill="#cfcfcf"/><rect x="5" y="11" width="8" height="4" fill="#cfcfcf"/></svg>
<svg class="a" style="left:1496px;top:67px" width="20" height="20" viewBox="0 0 20 20"><path d="M10 2v16" stroke="#bdbdbd" stroke-width="2"/><rect x="3" y="4" width="14" height="4" fill="#cfcfcf"/><rect x="5" y="11" width="10" height="4" fill="#cfcfcf"/></svg>
<svg class="a" style="left:1525px;top:67px" width="20" height="20" viewBox="0 0 20 20"><path d="M17 2v16" stroke="#bdbdbd" stroke-width="2"/><rect x="3" y="4" width="12" height="4" fill="#cfcfcf"/><rect x="7" y="11" width="8" height="4" fill="#cfcfcf"/></svg>
<svg class="a" style="left:1554px;top:67px" width="20" height="20" viewBox="0 0 20 20"><path d="M2 3h16" stroke="#bdbdbd" stroke-width="2"/><rect x="4" y="5" width="4" height="12" fill="#cfcfcf"/><rect x="11" y="5" width="4" height="8" fill="#cfcfcf"/></svg>
<svg class="a" style="left:1583px;top:67px" width="20" height="20" viewBox="0 0 20 20"><path d="M2 10h16" stroke="#bdbdbd" stroke-width="2"/><rect x="4" y="3" width="4" height="14" fill="#cfcfcf"/><rect x="11" y="5" width="4" height="10" fill="#cfcfcf"/></svg>
<svg class="a" style="left:1611px;top:67px" width="20" height="20" viewBox="0 0 20 20"><path d="M2 17h16" stroke="#bdbdbd" stroke-width="2"/><rect x="4" y="3" width="4" height="12" fill="#cfcfcf"/><rect x="11" y="7" width="4" height="8" fill="#cfcfcf"/></svg>
<svg class="a" style="left:1640px;top:67px" width="20" height="20" viewBox="0 0 20 20"><path d="M2 10h16" stroke="#bdbdbd" stroke-width="1.5"/><rect x="3" y="5" width="3" height="10" fill="#cfcfcf"/><rect x="9" y="3" width="3" height="14" fill="#cfcfcf"/><rect x="15" y="6" width="3" height="8" fill="#cfcfcf"/></svg>
<svg class="a" style="left:1670px;top:67px" width="20" height="20" viewBox="0 0 20 20"><path d="M10 2v16" stroke="#bdbdbd" stroke-width="1.5"/><rect x="5" y="2" width="10" height="3" fill="#cfcfcf"/><rect x="3" y="9" width="14" height="3" fill="#cfcfcf"/><rect x="6" y="15" width="8" height="3" fill="#cfcfcf"/></svg>
<svg class="a" style="left:1697px;top:67px" width="20" height="20" viewBox="0 0 20 20"><path d="M2 2v16M18 2v16M2 3h16" stroke="#bdbdbd" stroke-width="1.5"/><rect x="5" y="5" width="3" height="12" fill="#cfcfcf"/><rect x="11" y="5" width="3" height="12" fill="#cfcfcf"/></svg>
<svg class="a" style="left:1734px;top:67px" width="20" height="20" viewBox="0 0 20 20"><circle cx="10" cy="10" r="7" fill="none" stroke="#c4c4c4" stroke-width="3.2"/><path d="M2 6l5 0-2 5z" fill="#c4c4c4"/></svg>
<svg class="a" style="left:1763px;top:67px" width="20" height="20" viewBox="0 0 20 20"><circle cx="10" cy="10" r="7" fill="none" stroke="#c4c4c4" stroke-width="3.2"/><path d="M18 6l-5 0 2 5z" fill="#c4c4c4"/></svg>
<svg class="a" style="left:1792px;top:67px" width="20" height="20" viewBox="0 0 20 20"><path d="M2 10l6-6v12zM18 10l-6-6v12z" fill="#c4c4c4"/><path d="M10 3v14" stroke="#c4c4c4" stroke-width="1.6"/></svg>
<svg class="a" style="left:1820px;top:67px" width="20" height="20" viewBox="0 0 20 20"><path d="M10 2l-6 6h12zM10 18l-6-6h12z" fill="#c4c4c4"/><path d="M3 10h14" stroke="#c4c4c4" stroke-width="1.6"/></svg>
<svg class="a" style="left:1857px;top:67px" width="20" height="20" viewBox="0 0 20 20"><rect x="2" y="3" width="10" height="10" fill="#d6d6d6" stroke="#c4c4c4"/><rect x="8" y="8" width="10" height="10" fill="#bcbcbc"/></svg>
<div class="a" style="left:0px;top:97px;width:264px;height:22px;background:#efefef;border:1px solid #9c9c9c;border-radius:2px"></div>
<div class="t" style="left:5px;top:99px;font-size:16px;line-height:18px">画面列表</div>
<svg class="a" style="left:226px;top:101px" width="12" height="14" viewBox="0 0 12 14"><path d="M3 1h6v2H8v5h2v2H6.8v4H5.2v-4H2V8h2V3H3z" fill="#111"/></svg>
<svg class="a" style="left:244px;top:102px" width="14" height="14" viewBox="0 0 14 14"><path d="M3 3l9 8.5M12 3l-9 8.5" stroke="#000" stroke-width="2.6" stroke-linecap="round"/></svg>
<div class="a" style="left:0;top:125px;width:263px;height:35px;background:#fff"></div>
<div class="a" style="left:0;top:164px;width:263px;height:34px;background:#fff"></div>
<div class="a" style="left:0;top:202px;width:263px;height:36px;background:#fff"></div>
<div class="a" style="left:0;top:242px;width:263px;height:35px;background:#fff"></div>
<div class="t" style="left:5px;top:133px;font-size:15px;line-height:17px">画面类型</div>
<div class="t" style="left:5px;top:171px;font-size:15px;line-height:17px">查找方法</div>
<div class="t" style="left:5px;top:209px;font-size:15px;line-height:17px">精确查找</div>
<div class="a" style="left:133px;top:131px;width:127px;height:26px;background:#e5e5e5;border:1px solid #adadad"></div>
<div class="t" style="left:138px;top:136px;font-size:15px;line-height:17px">全部</div>
<svg class="a" style="left:242px;top:140px" width="12" height="8" viewBox="0 0 12 8"><path d="M1 1l5 5 5-5" fill="none" stroke="#555" stroke-width="1.3"/></svg>
<div class="a" style="left:133px;top:168px;width:127px;height:26px;background:#e5e5e5;border:1px solid #adadad"></div>
<div class="t" style="left:138px;top:173px;font-size:15px;line-height:17px">标题</div>
<svg class="a" style="left:242px;top:177px" width="12" height="8" viewBox="0 0 12 8"><path d="M1 1l5 5 5-5" fill="none" stroke="#555" stroke-width="1.3"/></svg>
<div class="a" style="left:133px;top:210px;width:65px;height:25px;background:#fff;border:1px solid #7a7a7a"></div>
<div class="a" style="left:202px;top:210px;width:57px;height:25px;background:#cccccc"></div>
<div class="t" style="left:214px;top:213px;font-size:15px;line-height:17px;color:#9c9c9c">查找</div>
<svg class="a" style="left:5px;top:250px" width="19" height="20" viewBox="0 0 19 20"><rect x="1" y="8" width="17" height="11" fill="#2f86d6" stroke="#1a4f8a"/><rect x="2" y="13" width="15" height="5" fill="#8fd0f5"/><text x="1.5" y="7.5" font-size="8" font-weight="bold" fill="#2a6fc0" font-family="Liberation Sans" transform="scale(.95,1)">NEW</text></svg>
<svg class="a" style="left:33px;top:250px" width="19" height="18" viewBox="0 0 19 18"><rect x="5" y="4" width="13" height="13" fill="#b4b4b4"/><path d="M1 6l5-5 5 4-4 6z" fill="#c4c4c4"/></svg>
<svg class="a" style="left:62px;top:250px" width="19" height="18" viewBox="0 0 19 18"><rect x="1" y="3" width="11" height="14" fill="#b4b4b4"/><rect x="9" y="9" width="9" height="9" fill="#c8c8c8" stroke="#aaa"/></svg>
<svg class="a" style="left:92px;top:250px" width="17" height="18" viewBox="0 0 17 18"><path d="M3 3l11 12M14 3L3 15" stroke="#a4a4a4" stroke-width="2.8"/></svg>
<div class="sep" style="left:118px;top:250px;height:20px"></div>
<svg class="a" style="left:130px;top:250px" width="19" height="18" viewBox="0 0 19 18"><rect x="2" y="1" width="15" height="11" fill="#9a9a9a" stroke="#666"/><rect x="4" y="3" width="11" height="7" fill="#5cc8f0"/><rect x="1" y="14" width="17" height="3" fill="#c8c8c8" stroke="#777" stroke-width=".6"/><rect x="8" y="12" width="3" height="4" fill="#222"/></svg>
<svg class="a" style="left:158px;top:250px" width="20" height="18" viewBox="0 0 20 18"><rect x="1" y="2" width="12" height="9" fill="#5ab0d8" stroke="#2f6f98"/><rect x="4" y="5" width="12" height="9" fill="#6cc0e8" stroke="#2f6f98"/><rect x="7" y="8" width="12" height="9" fill="#2f8fd0" stroke="#1f5f90"/></svg>
<svg class="a" style="left:187px;top:250px" width="20" height="18" viewBox="0 0 20 18"><rect x="6" y="1" width="11" height="14" fill="#eef" stroke="#3a5aa0"/><path d="M1 8l5-5v3h4v4H6v3z" fill="#e03030"/><path d="M13 10l5 4-5 4v-2H7v-4h6z" fill="#30a040"/></svg>
<svg class="a" style="left:215px;top:250px" width="22" height="19" viewBox="0 0 22 19"><rect x="2" y="2" width="10" height="7" fill="#8a8a8a" stroke="#3a70b0" stroke-width="1.6"/><rect x="10" y="10" width="10" height="7" fill="#9a9a9a" stroke="#3a70b0" stroke-width="1.6"/><path d="M5 9v5h5" stroke="#1a4fd0" stroke-width="1.5" fill="none"/><rect x="4" y="4" width="6" height="2" fill="#ddd"/><rect x="12" y="12" width="6" height="2" fill="#ddd"/></svg>
<div class="a" style="left:0;top:288px;width:263px;height:603px;background:#fdf9ef;border:1px solid #8a8a8a"></div>
<div class="a" style="left:241px;top:289px;width:21px;height:580px;background:#f0f0f0"></div>
<div class="a" style="left:242px;top:500px;width:18px;height:346px;background:#cdcdcd"></div>
<svg class="a" style="left:245px;top:295px" width="12" height="8" viewBox="0 0 12 8"><path d="M1 6l5-5 5 5" fill="none" stroke="#555" stroke-width="2.1"/></svg>
<svg class="a" style="left:245px;top:852px" width="12" height="8" viewBox="0 0 12 8"><path d="M1 1l5 5 5-5" fill="none" stroke="#555" stroke-width="2.1"/></svg>
<div class="a" style="left:1px;top:869px;width:261px;height:20px;background:#f0f0f0"></div>
<div class="a" style="left:23px;top:870px;width:83px;height:18px;background:#cdcdcd"></div>
<svg class="a" style="left:7px;top:873px" width="8" height="12" viewBox="0 0 8 12"><path d="M6 1L1 6l5 5" fill="none" stroke="#555" stroke-width="2.1"/></svg>
<svg class="a" style="left:225px;top:873px" width="8" height="12" viewBox="0 0 8 12"><path d="M2 1l5 5-5 5" fill="none" stroke="#555" stroke-width="2.1"/></svg>
<div class="a" style="left:22px;top:289px;width:79px;height:5px;background:#fff;border-bottom:1px dashed #555"></div>
<svg class="a" style="left:22px;top:296px" width="79" height="7" viewBox="0 0 79 7"><rect x="0.5" y="0.5" width="14.3" height="6" fill="#fff" stroke="#333" stroke-width=".8"/><rect x="16.3" y="0.5" width="14.3" height="6" fill="#fff" stroke="#333" stroke-width=".8"/><rect x="32.1" y="0.5" width="14.3" height="6" fill="#fff" stroke="#333" stroke-width=".8"/><rect x="47.9" y="0.5" width="14.3" height="6" fill="#fff" stroke="#333" stroke-width=".8"/><rect x="63.7" y="0.5" width="14.3" height="6" fill="#fff" stroke="#333" stroke-width=".8"/></svg>
<div class="a" style="left:22px;top:321px;width:79px;height:45px;background:#dadada"></div>
<div class="a" style="left:24px;top:354px;width:75px;height:3px;background:#b0b0b0"></div>
<div class="a" style="left:28px;top:354px;width:3px;height:3px;background:#333"></div>
<div class="t" style="left:185px;top:337px;font-size:14px;color:#222">B0006</div>
<div class="a" style="left:22px;top:384px;width:79px;height:44px;background:#dadada"></div>
<svg class="a" style="left:22px;top:421px" width="79" height="7" viewBox="0 0 79 7"><rect x="0.5" y="0.5" width="14.3" height="6" fill="#fff" stroke="#333" stroke-width=".8"/><rect x="16.3" y="0.5" width="14.3" height="6" fill="#fff" stroke="#333" stroke-width=".8"/><rect x="32.1" y="0.5" width="14.3" height="6" fill="#fff" stroke="#333" stroke-width=".8"/><rect x="47.9" y="0.5" width="14.3" height="6" fill="#fff" stroke="#333" stroke-width=".8"/><rect x="63.7" y="0.5" width="14.3" height="6" fill="#fff" stroke="#333" stroke-width=".8"/></svg>
<div class="t" style="left:185px;top:399px;font-size:14px;color:#222">B0007</div>
<svg class="a" style="left:3px;top:443px" width="21" height="20" viewBox="0 0 21 20"><path d="M4 2h9l2 4 4 2 1 4-3 3-2 3H5l-3-3V5z" fill="#7a8a98" stroke="#3a3a3a" stroke-width="1.1"/><path d="M4 3h8l1 4-2 6-6 1-2-3V5z" fill="#4fb4ea"/><ellipse cx="9" cy="15" rx="6" ry="3" fill="#e8e8f0"/><circle cx="12" cy="8" r="1.4" fill="#f0c040"/><circle cx="15" cy="8.5" r="1.3" fill="#e0e0e0"/><circle cx="10" cy="11" r="1.3" fill="#e04040"/><circle cx="14" cy="12" r="1.4" fill="#30a040"/><circle cx="17" cy="11" r="1.3" fill="#5080e0"/></svg>
<div class="t" style="left:28px;top:443px;font-size:15px;line-height:18px">窗口画面</div>
<div class="a" style="left:21px;top:475px;width:81px;height:47px;background:#000"></div>
<div class="t" style="left:181px;top:492px;font-size:14px;color:#222">W0001</div>
<svg class="a" style="left:3px;top:535px" width="21" height="20" viewBox="0 0 21 20"><path d="M4 2h9l2 4 4 2 1 4-3 3-2 3H5l-3-3V5z" fill="#7a8a98" stroke="#3a3a3a" stroke-width="1.1"/><path d="M4 3h8l1 4-2 6-6 1-2-3V5z" fill="#4fb4ea"/><ellipse cx="9" cy="15" rx="6" ry="3" fill="#e8e8f0"/><circle cx="12" cy="8" r="1.4" fill="#f0c040"/><circle cx="15" cy="8.5" r="1.3" fill="#e0e0e0"/><circle cx="10" cy="11" r="1.3" fill="#e04040"/><circle cx="14" cy="12" r="1.4" fill="#30a040"/><circle cx="17" cy="11" r="1.3" fill="#5080e0"/></svg>
<div class="t" style="left:28px;top:535px;font-size:15px;line-height:18px">键盘画面</div>
<svg class="a" style="left:38px;top:560px" width="47" height="60" viewBox="0 0 47 60"><rect x="0" y="0" width="47" height="60" fill="#303040"/><rect x="1.5" y="1.5" width="44" height="10" fill="#d8d8d8"/><rect x="5" y="5" width="37" height="3.5" fill="#555"/><rect x="2" y="11" width="43" height="5" fill="#1840ff"/><rect x="3" y="12" width="27" height="2" fill="#6080ff"/><rect x="1.5" y="16.5" width="8.4" height="8.2" rx="1.5" fill="#b9b287"/><rect x="3.5" y="18.5" width="4.6" height="4.6" fill="#e4e0c8"/><circle cx="5.8" cy="20.8" r="1.1" fill="#222"/><rect x="10.1" y="16.5" width="8.4" height="8.2" rx="1.5" fill="#b9b287"/><rect x="12.1" y="18.5" width="4.6" height="4.6" fill="#e4e0c8"/><circle cx="14.4" cy="20.8" r="1.1" fill="#222"/><rect x="18.7" y="16.5" width="8.4" height="8.2" rx="1.5" fill="#b9b287"/><rect x="20.7" y="18.5" width="4.6" height="4.6" fill="#e4e0c8"/><circle cx="23.0" cy="20.8" r="1.1" fill="#222"/><rect x="27.3" y="16.5" width="17.0" height="8.2" rx="1.5" fill="#b9b287"/><rect x="29.3" y="18.5" width="13.2" height="4.6" fill="#e4e0c8"/><circle cx="35.9" cy="20.8" r="1.1" fill="#222"/><rect x="1.5" y="25.1" width="8.4" height="8.2" rx="1.5" fill="#b9b287"/><rect x="3.5" y="27.1" width="4.6" height="4.6" fill="#e4e0c8"/><circle cx="5.8" cy="29.4" r="1.1" fill="#222"/><rect x="10.1" y="25.1" width="8.4" height="8.2" rx="1.5" fill="#b9b287"/><rect x="12.1" y="27.1" width="4.6" height="4.6" fill="#e4e0c8"/><circle cx="14.4" cy="29.4" r="1.1" fill="#222"/><rect x="18.7" y="25.1" width="8.4" height="8.2" rx="1.5" fill="#b9b287"/><rect x="20.7" y="27.1" width="4.6" height="4.6" fill="#e4e0c8"/><circle cx="23.0" cy="29.4" r="1.1" fill="#222"/><rect x="27.3" y="25.1" width="8.4" height="8.2" rx="1.5" fill="#b9b287"/><rect x="29.3" y="27.1" width="4.6" height="4.6" fill="#e4e0c8"/><circle cx="31.6" cy="29.4" r="1.1" fill="#222"/><rect x="35.9" y="25.1" width="8.4" height="8.2" rx="1.5" fill="#b9b287"/><rect x="37.9" y="27.1" width="4.6" height="4.6" fill="#e4e0c8"/><circle cx="40.2" cy="29.4" r="1.1" fill="#222"/><rect x="1.5" y="33.7" width="8.4" height="8.2" rx="1.5" fill="#b9b287"/><rect x="3.5" y="35.7" width="4.6" height="4.6" fill="#e4e0c8"/><circle cx="5.8" cy="38.0" r="1.1" fill="#222"/><rect x="10.1" y="33.7" width="8.4" height="8.2" rx="1.5" fill="#b9b287"/><rect x="12.1" y="35.7" width="4.6" height="4.6" fill="#e4e0c8"/><circle cx="14.4" cy="38.0" r="1.1" fill="#222"/><rect x="18.7" y="33.7" width="8.4" height="8.2" rx="1.5" fill="#b9b287"/><rect x="20.7" y="35.7" width="4.6" height="4.6" fill="#e4e0c8"/><circle cx="23.0" cy="38.0" r="1.1" fill="#222"/><rect x="27.3" y="33.7" width="8.4" height="8.2" rx="1.5" fill="#b9b287"/><rect x="29.3" y="35.7" width="4.6" height="4.6" fill="#e4e0c8"/><circle cx="31.6" cy="38.0" r="1.1" fill="#222"/><rect x="35.9" y="33.7" width="8.4" height="8.2" rx="1.5" fill="#b9b287"/><rect x="37.9" y="35.7" width="4.6" height="4.6" fill="#e4e0c8"/><circle cx="40.2" cy="38.0" r="1.1" fill="#222"/><rect x="1.5" y="42.3" width="8.4" height="8.2" rx="1.5" fill="#b9b287"/><rect x="3.5" y="44.3" width="4.6" height="4.6" fill="#e4e0c8"/><circle cx="5.8" cy="46.6" r="1.1" fill="#222"/><rect x="10.1" y="42.3" width="8.4" height="8.2" rx="1.5" fill="#b9b287"/><rect x="12.1" y="44.3" width="4.6" height="4.6" fill="#e4e0c8"/><circle cx="14.4" cy="46.6" r="1.1" fill="#222"/><rect x="18.7" y="42.3" width="8.4" height="8.2" rx="1.5" fill="#b9b287"/><rect x="20.7" y="44.3" width="4.6" height="4.6" fill="#e4e0c8"/><circle cx="23.0" cy="46.6" r="1.1" fill="#222"/><rect x="27.3" y="42.3" width="8.4" height="8.2" rx="1.5" fill="#b9b287"/><rect x="29.3" y="44.3" width="4.6" height="4.6" fill="#e4e0c8"/><circle cx="31.6" cy="46.6" r="1.1" fill="#222"/><rect x="35.9" y="42.3" width="8.4" height="8.2" rx="1.5" fill="#b9b287"/><rect x="37.9" y="44.3" width="4.6" height="4.6" fill="#e4e0c8"/><circle cx="40.2" cy="46.6" r="1.1" fill="#222"/><rect x="1.5" y="50.9" width="17.0" height="8.2" rx="1.5" fill="#b9b287"/><rect x="3.5" y="52.9" width="13.2" height="4.6" fill="#e4e0c8"/><circle cx="10.1" cy="55.2" r="1.1" fill="#222"/><rect x="18.7" y="50.9" width="8.4" height="8.2" rx="1.5" fill="#b9b287"/><rect x="20.7" y="52.9" width="4.6" height="4.6" fill="#e4e0c8"/><circle cx="23.0" cy="55.2" r="1.1" fill="#222"/><rect x="27.3" y="50.9" width="17.0" height="8.2" rx="1.5" fill="#b9b287"/><rect x="29.3" y="52.9" width="13.2" height="4.6" fill="#e4e0c8"/><circle cx="35.9" cy="55.2" r="1.1" fill="#222"/></svg>
<div class="t" style="left:185px;top:584px;font-size:14px;color:#222">K0001</div>
<svg class="a" style="left:3px;top:628px" width="21" height="20" viewBox="0 0 21 20"><path d="M4 2h9l2 4 4 2 1 4-3 3-2 3H5l-3-3V5z" fill="#7a8a98" stroke="#3a3a3a" stroke-width="1.1"/><path d="M4 3h8l1 4-2 6-6 1-2-3V5z" fill="#4fb4ea"/><ellipse cx="9" cy="15" rx="6" ry="3" fill="#e8e8f0"/><circle cx="12" cy="8" r="1.4" fill="#f0c040"/><circle cx="15" cy="8.5" r="1.3" fill="#e0e0e0"/><circle cx="10" cy="11" r="1.3" fill="#e04040"/><circle cx="14" cy="12" r="1.4" fill="#30a040"/><circle cx="17" cy="11" r="1.3" fill="#5080e0"/></svg>
<div class="t" style="left:28px;top:628px;font-size:15px;line-height:18px">视频模块窗口画面</div>
<svg class="a" style="left:3px;top:658px" width="21" height="20" viewBox="0 0 21 20"><path d="M4 2h9l2 4 4 2 1 4-3 3-2 3H5l-3-3V5z" fill="#7a8a98" stroke="#3a3a3a" stroke-width="1.1"/><path d="M4 3h8l1 4-2 6-6 1-2-3V5z" fill="#4fb4ea"/><ellipse cx="9" cy="15" rx="6" ry="3" fill="#e8e8f0"/><circle cx="12" cy="8" r="1.4" fill="#f0c040"/><circle cx="15" cy="8.5" r="1.3" fill="#e0e0e0"/><circle cx="10" cy="11" r="1.3" fill="#e04040"/><circle cx="14" cy="12" r="1.4" fill="#30a040"/><circle cx="17" cy="11" r="1.3" fill="#5080e0"/></svg>
<div class="t" style="left:28px;top:658px;font-size:15px;line-height:18px">逻辑画面</div>
<svg class="a" style="left:21px;top:683px" width="81" height="60" viewBox="0 0 81 60"><rect x=".5" y=".5" width="80" height="59" fill="#fff" stroke="#555" stroke-width="1"/><path d="M6 1v58M73 1v58" stroke="#1a1aa0" stroke-width="2"/><path d="M6 9h3" stroke="#1a1aa0" stroke-width="1.4"/><text x="10" y="14" font-size="11.5" font-weight="bold" fill="#7070e0" font-family="Liberation Sans">INIT</text><g stroke="#44bfea" stroke-width="2.2" fill="none"><path d="M8 29h5M13 25v8M16 25v8M16 29h7M23 25v8M26 25v8M26 29h3M29 23h6v12h-6zM35 29h14"/><circle cx="53" cy="29" r="3.5"/><path d="M57 29h13M19 29v12h11M30 36h6v11h-6zM36 41h9v-12"/></g></svg>
<div class="t" style="left:197px;top:706px;font-size:14px;color:#222">INIT</div>
<svg class="a" style="left:21px;top:745px" width="81" height="60" viewBox="0 0 81 60"><rect x=".5" y=".5" width="80" height="59" fill="#fff" stroke="#555" stroke-width="1"/><path d="M6 1v58M73 1v58" stroke="#1a1aa0" stroke-width="2"/><path d="M6 9h3" stroke="#1a1aa0" stroke-width="1.4"/><text x="10" y="14" font-size="11.5" font-weight="bold" fill="#e06060" font-family="Liberation Sans">MAIN</text><g stroke="#44bfea" stroke-width="2.2" fill="none"><path d="M8 29h5M13 25v8M16 25v8M16 29h7M23 25v8M26 25v8M26 29h3M29 23h6v12h-6zM35 29h14"/><circle cx="53" cy="29" r="3.5"/><path d="M57 29h13M19 29v12h11M30 36h6v11h-6zM36 41h9v-12"/></g></svg>
<div class="t" style="left:189px;top:769px;font-size:14px;color:#222">MAIN</div>
<svg class="a" style="left:3px;top:813px" width="21" height="20" viewBox="0 0 21 20"><path d="M4 2h9l2 4 4 2 1 4-3 3-2 3H5l-3-3V5z" fill="#7a8a98" stroke="#3a3a3a" stroke-width="1.1"/><path d="M4 3h8l1 4-2 6-6 1-2-3V5z" fill="#4fb4ea"/><ellipse cx="9" cy="15" rx="6" ry="3" fill="#e8e8f0"/><circle cx="12" cy="8" r="1.4" fill="#f0c040"/><circle cx="15" cy="8.5" r="1.3" fill="#e0e0e0"/><circle cx="10" cy="11" r="1.3" fill="#e04040"/><circle cx="14" cy="12" r="1.4" fill="#30a040"/><circle cx="17" cy="11" r="1.3" fill="#5080e0"/></svg>
<div class="t" style="left:28px;top:813px;font-size:15px;line-height:18px">功能块</div>
<svg class="a" style="left:3px;top:843px" width="21" height="20" viewBox="0 0 21 20"><path d="M4 2h9l2 4 4 2 1 4-3 3-2 3H5l-3-3V5z" fill="#7a8a98" stroke="#3a3a3a" stroke-width="1.1"/><path d="M4 3h8l1 4-2 6-6 1-2-3V5z" fill="#4fb4ea"/><ellipse cx="9" cy="15" rx="6" ry="3" fill="#e8e8f0"/><circle cx="12" cy="8" r="1.4" fill="#f0c040"/><circle cx="15" cy="8.5" r="1.3" fill="#e0e0e0"/><circle cx="10" cy="11" r="1.3" fill="#e04040"/><circle cx="14" cy="12" r="1.4" fill="#30a040"/><circle cx="17" cy="11" r="1.3" fill="#5080e0"/></svg>
<div class="t" style="left:28px;top:843px;font-size:15px;line-height:18px">I/O 画面</div>
<div class="a" style="left:1px;top:866px;width:240px;height:3px;background:#fdf9ef"></div>
<div class="a" style="left:0;top:892px;width:263px;height:1px;background:#9c9c9c"></div>
<div class="a" style="left:194px;top:892px;width:61px;height:27px;background:#fafafa;border:1px solid #9c9c9c;border-top:none"></div>
<svg class="a" style="left:8px;top:896px" width="17" height="18" viewBox="0 0 17 18"><g fill="#3fcf20"><rect x="0" y="0" width="17" height="18"/></g><g fill="#fafafa"><rect x="3" y="3" width="2" height="2"/><rect x="7" y="3" width="2" height="2"/><rect x="11" y="3" width="2" height="2"/><rect x="3" y="7" width="2" height="2"/><rect x="7" y="7" width="2" height="2"/><rect x="11" y="7" width="2" height="2"/><rect x="3" y="11" width="2" height="2"/><rect x="7" y="11" width="2" height="2"/><rect x="11" y="11" width="2" height="2"/><rect x="3" y="15" width="2" height="2"/><rect x="7" y="15" width="2" height="2"/><rect x="11" y="15" width="2" height="2"/></g></svg>
<div class="t" style="left:39px;top:897px;font-size:15px;color:#8c8c8c;line-height:18px">地</div>
<div class="sep" style="left:66px;top:897px;height:20px"></div>
<svg class="a" style="left:71px;top:896px" width="18" height="18" viewBox="0 0 18 18"><rect x="0" y="0" width="6" height="6" fill="#20d0f0"/><rect x="6" y="0" width="6" height="6" fill="#30a030"/><rect x="12" y="0" width="6" height="6" fill="#f0e020"/><rect x="0" y="6" width="6" height="6" fill="#8030c0"/><rect x="12" y="6" width="6" height="6" fill="#f09020"/><rect x="0" y="12" width="6" height="6" fill="#3040b0"/><rect x="6" y="12" width="6" height="6" fill="#a040b0"/><rect x="12" y="12" width="6" height="6" fill="#e02020"/></svg>
<div class="t" style="left:102px;top:897px;font-size:15px;color:#8c8c8c;line-height:18px">颜</div>
<div class="sep" style="left:129px;top:897px;height:20px"></div>
<svg class="a" style="left:134px;top:896px" width="18" height="18" viewBox="0 0 18 18"><circle cx="5" cy="5" r="3" fill="#e02020"/><circle cx="13" cy="9" r="3.5" fill="#30c030"/><circle cx="13" cy="2" r="1.8" fill="#f0d020"/><rect x="1" y="10" width="9" height="6" fill="#30a0e0" stroke="#206090" stroke-width=".6"/></svg>
<div class="t" style="left:164px;top:897px;font-size:15px;color:#8c8c8c;line-height:18px">工</div>
<svg class="a" style="left:197px;top:896px" width="17" height="17" viewBox="0 0 17 17"><rect x=".75" y=".75" width="15.5" height="15.5" fill="#fff" stroke="#4050d0" stroke-width="1.5"/><g fill="none" stroke="#4050d0" stroke-width="1.3"><rect x="3" y="3" width="4.5" height="4.5"/><rect x="9.5" y="3" width="4.5" height="4.5"/><rect x="3" y="9.5" width="4.5" height="4.5"/><rect x="9.5" y="9.5" width="4.5" height="4.5"/></g></svg>
<div class="t" style="left:226px;top:897px;font-size:15px;line-height:18px">画</div>
<div class="a" style="left:269px;top:93px;width:1174px;height:828px;background:#f3f3f3;border:1px solid #a0a0a0"></div>
<div class="a" style="left:270px;top:94px;width:1172px;height:29px;background:#f7f7f7"></div>
<svg class="a" style="left:280px;top:101px" width="19" height="14" viewBox="0 0 19 14"><defs><linearGradient id="tg" x1="0" y1="0" x2="0" y2="1"><stop offset="0" stop-color="#c8f4ff"/><stop offset=".45" stop-color="#7fd0f4"/><stop offset=".5" stop-color="#3fb0e8"/><stop offset="1" stop-color="#48b8ee"/></linearGradient></defs><rect x="1" y="1" width="17" height="12" rx="1" fill="url(#tg)" stroke="#14507a" stroke-width="1.6"/></svg>
<div class="t" style="left:307px;top:99px;font-size:14.5px;line-height:18px;color:#8f8f8f">基本 3(Feature ...)</div>
<svg class="a" style="left:438px;top:101px" width="15" height="15" viewBox="0 0 15 15"><rect x=".5" y=".5" width="14" height="14" fill="#7a7a7a"/><path d="M3.5 3.5l8 8M11.5 3.5l-8 8" stroke="#fff" stroke-width="2"/></svg>
<div class="sep" style="left:458px;top:99px;height:20px"></div>
<svg class="a" style="left:463px;top:101px" width="19" height="14" viewBox="0 0 19 14"><defs><linearGradient id="tg" x1="0" y1="0" x2="0" y2="1"><stop offset="0" stop-color="#c8f4ff"/><stop offset=".45" stop-color="#7fd0f4"/><stop offset=".5" stop-color="#3fb0e8"/><stop offset="1" stop-color="#48b8ee"/></linearGradient></defs><rect x="1" y="1" width="17" height="12" rx="1" fill="url(#tg)" stroke="#14507a" stroke-width="1.6"/></svg>
<div class="t" style="left:492px;top:99px;font-size:14.5px;line-height:18px;color:#8f8f8f">基本 4(I/O moni...)</div>
<svg class="a" style="left:622px;top:101px" width="15" height="15" viewBox="0 0 15 15"><rect x=".5" y=".5" width="14" height="14" fill="#7a7a7a"/><path d="M3.5 3.5l8 8M11.5 3.5l-8 8" stroke="#fff" stroke-width="2"/></svg>
<div class="sep" style="left:643px;top:99px;height:20px"></div>
<svg class="a" style="left:649px;top:101px" width="19" height="14" viewBox="0 0 19 14"><defs><linearGradient id="tg" x1="0" y1="0" x2="0" y2="1"><stop offset="0" stop-color="#c8f4ff"/><stop offset=".45" stop-color="#7fd0f4"/><stop offset=".5" stop-color="#3fb0e8"/><stop offset="1" stop-color="#48b8ee"/></linearGradient></defs><rect x="1" y="1" width="17" height="12" rx="1" fill="url(#tg)" stroke="#14507a" stroke-width="1.6"/></svg>
<div class="t" style="left:677px;top:99px;font-size:14.5px;line-height:18px;color:#8f8f8f">基本 5(Alarm hi...)</div>
<svg class="a" style="left:806px;top:101px" width="15" height="15" viewBox="0 0 15 15"><rect x=".5" y=".5" width="14" height="14" fill="#7a7a7a"/><path d="M3.5 3.5l8 8M11.5 3.5l-8 8" stroke="#fff" stroke-width="2"/></svg>
<div class="sep" style="left:827px;top:99px;height:20px"></div>
<svg class="a" style="left:832px;top:101px" width="19" height="14" viewBox="0 0 19 14"><defs><linearGradient id="tg" x1="0" y1="0" x2="0" y2="1"><stop offset="0" stop-color="#c8f4ff"/><stop offset=".45" stop-color="#7fd0f4"/><stop offset=".5" stop-color="#3fb0e8"/><stop offset="1" stop-color="#48b8ee"/></linearGradient></defs><rect x="1" y="1" width="17" height="12" rx="1" fill="url(#tg)" stroke="#14507a" stroke-width="1.6"/></svg>
<div class="t" style="left:861px;top:99px;font-size:14.5px;line-height:18px;color:#8f8f8f">基本 7(public2)</div>
<svg class="a" style="left:972px;top:101px" width="15" height="15" viewBox="0 0 15 15"><rect x=".5" y=".5" width="14" height="14" fill="#7a7a7a"/><path d="M3.5 3.5l8 8M11.5 3.5l-8 8" stroke="#fff" stroke-width="2"/></svg>
<div class="sep" style="left:992px;top:99px;height:20px"></div>
<svg class="a" style="left:997px;top:101px" width="19" height="14" viewBox="0 0 19 14"><defs><linearGradient id="tg" x1="0" y1="0" x2="0" y2="1"><stop offset="0" stop-color="#c8f4ff"/><stop offset=".45" stop-color="#7fd0f4"/><stop offset=".5" stop-color="#3fb0e8"/><stop offset="1" stop-color="#48b8ee"/></linearGradient></defs><rect x="1" y="1" width="17" height="12" rx="1" fill="url(#tg)" stroke="#14507a" stroke-width="1.6"/></svg>
<div class="t" style="left:1026px;top:99px;font-size:14.5px;line-height:18px;color:#8f8f8f">基本 6(public1)</div>
<svg class="a" style="left:1137px;top:101px" width="15" height="15" viewBox="0 0 15 15"><rect x=".5" y=".5" width="14" height="14" fill="#7a7a7a"/><path d="M3.5 3.5l8 8M11.5 3.5l-8 8" stroke="#fff" stroke-width="2"/></svg>
<div class="sep" style="left:1155px;top:99px;height:20px"></div>
<div class="a" style="left:1158px;top:94px;width:243px;height:29px;background:#fff"></div>
<svg class="a" style="left:1164px;top:100px" width="17" height="17" viewBox="0 0 17 17"><rect x="0" y="0" width="17" height="17" fill="#555"/><g fill="#ddd"><rect x="2" y="2" width="3" height="3"/><rect x="7" y="2" width="3" height="3"/><rect x="12" y="2" width="3" height="3"/><rect x="2" y="7" width="3" height="3"/><rect x="7" y="7" width="3" height="3"/><rect x="12" y="7" width="3" height="3"/><rect x="2" y="12" width="3" height="3"/><rect x="7" y="12" width="3" height="3"/><rect x="12" y="12" width="3" height="3"/></g></svg>
<div class="a" style="left:1189px;top:94px;width:212px;height:29px;overflow:hidden"><div class="t" style="left:1px;top:5px;font-size:14.5px;line-height:18px;font-weight:bold">键盘 1(西能自动化_18962034521)</div></div>
<svg class="a" style="left:1411px;top:104px" width="7" height="11" viewBox="0 0 7 11"><path d="M7 0v11L0 5.5z" fill="#000"/></svg>
<svg class="a" style="left:1427px;top:104px" width="7" height="11" viewBox="0 0 7 11"><path d="M0 0v11l7-5.5z" fill="#000"/></svg>
<div class="a" style="left:272px;top:124px;width:1147px;height:774px;background:#b4b4b4"></div>
<div class="a" style="left:272px;top:160px;width:1147px;height:2px;background:#c8c8c8"></div>
<div class="a" style="left:1356px;top:130px;width:25px;height:25px;background:#4a4aff;border:1px solid #2a2ad0"></div>
<div class="a" style="left:1359px;top:133px;width:19px;height:19px;background:#ffff00;border:2px solid #333"></div>
<div class="a" style="left:1419px;top:124px;width:22px;height:774px;background:#f0f0f0"></div>
<div class="a" style="left:1420px;top:170px;width:20px;height:510px;background:#cdcdcd"></div>
<svg class="a" style="left:1424px;top:130px" width="12" height="8" viewBox="0 0 12 8"><path d="M1 6l5-5 5 5" fill="none" stroke="#555" stroke-width="2.1"/></svg>
<svg class="a" style="left:1424px;top:883px" width="12" height="8" viewBox="0 0 12 8"><path d="M1 1l5 5 5-5" fill="none" stroke="#555" stroke-width="2.1"/></svg>
<div class="a" style="left:272px;top:898px;width:1169px;height:22px;background:#f0f0f0"></div>
<div class="a" style="left:672px;top:899px;width:682px;height:19px;background:#cdcdcd"></div>
<svg class="a" style="left:277px;top:902px" width="8" height="12" viewBox="0 0 8 12"><path d="M6 1L1 6l5 5" fill="none" stroke="#555" stroke-width="2.1"/></svg>
<svg class="a" style="left:1404px;top:902px" width="8" height="12" viewBox="0 0 8 12"><path d="M2 1l5 5-5 5" fill="none" stroke="#555" stroke-width="2.1"/></svg>
<svg class="a" style="left:288px;top:140px" width="40" height="40"><rect x="31.5" y="1.5" width="5" height="31" fill="#fbfbfb" stroke="#8a8a8a" stroke-width="1"/><path d="M36.5 1.5v31" stroke="#6a6a6a" stroke-width="1.2"/><rect x="1.5" y="31.5" width="31" height="5.5" fill="#fbfbfb" stroke="#8a8a8a" stroke-width="1"/><path d="M1.5 37h31" stroke="#6a6a6a" stroke-width="1.2"/><path d="M21 30l9.5-8.5V30z" fill="#dcdcdc" stroke="#777" stroke-width="1"/><path d="M3 36l4-3 3 3" fill="none" stroke="#999" stroke-width=".8"/></svg>
<svg class="a" style="left:847px;top:140px;transform:scaleX(-1)" width="40" height="40"><rect x="31.5" y="1.5" width="5" height="31" fill="#fbfbfb" stroke="#8a8a8a" stroke-width="1"/><path d="M36.5 1.5v31" stroke="#6a6a6a" stroke-width="1.2"/><rect x="1.5" y="31.5" width="31" height="5.5" fill="#fbfbfb" stroke="#8a8a8a" stroke-width="1"/><path d="M1.5 37h31" stroke="#6a6a6a" stroke-width="1.2"/><path d="M21 30l9.5-8.5V30z" fill="#dcdcdc" stroke="#777" stroke-width="1"/><path d="M3 36l4-3 3 3" fill="none" stroke="#999" stroke-width=".8"/></svg>
<svg class="a" style="left:288px;top:862px;transform:scaleY(-1)" width="40" height="40"><rect x="31.5" y="1.5" width="5" height="31" fill="#fbfbfb" stroke="#8a8a8a" stroke-width="1"/><path d="M36.5 1.5v31" stroke="#6a6a6a" stroke-width="1.2"/><rect x="1.5" y="31.5" width="31" height="5.5" fill="#fbfbfb" stroke="#8a8a8a" stroke-width="1"/><path d="M1.5 37h31" stroke="#6a6a6a" stroke-width="1.2"/><path d="M21 30l9.5-8.5V30z" fill="#dcdcdc" stroke="#777" stroke-width="1"/><path d="M3 36l4-3 3 3" fill="none" stroke="#999" stroke-width=".8"/></svg>
<svg class="a" style="left:847px;top:862px;transform:scale(-1,-1)" width="40" height="40"><rect x="31.5" y="1.5" width="5" height="31" fill="#fbfbfb" stroke="#8a8a8a" stroke-width="1"/><path d="M36.5 1.5v31" stroke="#6a6a6a" stroke-width="1.2"/><rect x="1.5" y="31.5" width="31" height="5.5" fill="#fbfbfb" stroke="#8a8a8a" stroke-width="1"/><path d="M1.5 37h31" stroke="#6a6a6a" stroke-width="1.2"/><path d="M21 30l9.5-8.5V30z" fill="#dcdcdc" stroke="#777" stroke-width="1"/><path d="M3 36l4-3 3 3" fill="none" stroke="#999" stroke-width=".8"/></svg>
<div class="a" style="left:322px;top:174px;width:531px;height:694px;background:#0a3cff;border:4px solid #000"></div>
<div class="a" style="left:334px;top:184px;width:507px;height:110px;background:#d1d1d1;border:1px solid #f2f6ff"></div>
<div class="t serif" style="left:348px;top:205px;font-size:60px;line-height:70px;color:#222;letter-spacing:0px">1234567890123456</div>
<div class="t serif" style="left:341px;top:302px;font-size:30px;line-height:34px;color:#fff;transform:scaleX(0.78);transform-origin:0 0">MIN</div>
<div class="t serif" style="left:389px;top:302px;font-size:30px;line-height:34px;color:#fff;transform:scaleX(1);transform-origin:0 0">:</div>
<div class="t serif" style="left:409px;top:301px;font-size:33px;line-height:34px;color:#fff;transform:scaleX(1);transform-origin:0 0">1</div>
<div class="t serif" style="left:612px;top:302px;font-size:30px;line-height:34px;color:#fff;transform:scaleX(0.66);transform-origin:0 0">MAX</div>
<div class="t serif" style="left:660px;top:302px;font-size:30px;line-height:34px;color:#fff;transform:scaleX(1);transform-origin:0 0">:</div>
<div class="t serif" style="left:679px;top:301px;font-size:33px;line-height:34px;color:#fff;transform:scaleX(1);transform-origin:0 0">2</div>
<svg class="a" style="left:408px;top:300px" width="290" height="36"><rect x="1" y="1" width="288" height="34" fill="none" stroke="#000" stroke-width="1.6"/><rect x="1" y="1" width="288" height="34" fill="none" stroke="#fff" stroke-width="1.6" stroke-dasharray="3 2"/></svg>
<div class="key" style="left:327px;top:343px;width:101px;height:98px"><div class="in" style="left:15px;top:15px;width:67px;height:64px"></div><svg class="a" style="left:28px;top:26px" width="41" height="46"><path d="M40 1v44L1 23z" fill="#000"/></svg></div>
<div class="key" style="left:432px;top:343px;width:101px;height:98px"><div class="in" style="left:15px;top:15px;width:67px;height:64px"></div><svg class="a" style="left:29px;top:26px" width="41" height="46"><path d="M1 1v44l39-22z" fill="#000"/></svg></div>
<div class="key" style="left:536px;top:343px;width:101px;height:98px"><div class="in" style="left:15px;top:15px;width:67px;height:64px"></div><div class="lb" style="top:-0.5px;height:98px;line-height:98px;font-size:46px;transform:scaleX(0.945)">CLR</div></div>
<div class="key" style="left:641px;top:343px;width:208px;height:98px"><div class="in" style="left:15px;top:15px;width:174px;height:64px"></div><div class="lb" style="top:-0.5px;height:98px;line-height:98px;font-size:46px;transform:scaleX(0.945)">CANCEL</div></div>
<div class="key" style="left:327px;top:447px;width:101px;height:98px"><div class="in" style="left:15px;top:15px;width:67px;height:64px"></div><div class="lb" style="top:-3px;height:98px;line-height:98px;font-size:59px;transform:scaleX(1.0)">7</div></div>
<div class="key" style="left:432px;top:447px;width:101px;height:98px"><div class="in" style="left:15px;top:15px;width:67px;height:64px"></div><div class="lb" style="top:-3px;height:98px;line-height:98px;font-size:59px;transform:scaleX(1.0)">8</div></div>
<div class="key" style="left:536px;top:447px;width:101px;height:98px"><div class="in" style="left:15px;top:15px;width:67px;height:64px"></div><div class="lb" style="top:-3px;height:98px;line-height:98px;font-size:59px;transform:scaleX(1.0)">9</div></div>
<div class="key" style="left:641px;top:447px;width:102px;height:98px"><div class="in" style="left:15px;top:15px;width:68px;height:64px"></div><div class="lb" style="top:-3px;height:98px;line-height:98px;font-size:48px;transform:scaleX(1.0)">+</div></div>
<div class="key" style="left:747px;top:447px;width:102px;height:98px"><div class="in" style="left:15px;top:15px;width:68px;height:64px"></div><div class="lb" style="top:-3px;height:98px;line-height:98px;font-size:52px;transform:scaleX(1.0)">-</div></div>
<div class="key" style="left:327px;top:551px;width:101px;height:98px"><div class="in" style="left:15px;top:15px;width:67px;height:64px"></div><div class="lb" style="top:-3px;height:98px;line-height:98px;font-size:59px;transform:scaleX(1.0)">4</div></div>
<div class="key" style="left:432px;top:551px;width:101px;height:98px"><div class="in" style="left:15px;top:15px;width:67px;height:64px"></div><div class="lb" style="top:-3px;height:98px;line-height:98px;font-size:59px;transform:scaleX(1.0)">5</div></div>
<div class="key" style="left:536px;top:551px;width:101px;height:98px"><div class="in" style="left:15px;top:15px;width:67px;height:64px"></div><div class="lb" style="top:-3px;height:98px;line-height:98px;font-size:59px;transform:scaleX(1.0)">6</div></div>
<div class="key" style="left:641px;top:551px;width:102px;height:98px"><div class="in" style="left:15px;top:15px;width:68px;height:64px"></div><div class="lb" style="top:-1px;height:98px;line-height:98px;font-size:46px;transform:scaleX(0.95)">BS</div></div>
<div class="key" style="left:747px;top:551px;width:102px;height:98px"><div class="in" style="left:15px;top:15px;width:68px;height:64px"></div><svg class="a" style="left:27px;top:28px" width="48" height="39"><path d="M1 38h46L24 1z" fill="#000"/></svg></div>
<div class="key" style="left:327px;top:655px;width:101px;height:97px"><div class="in" style="left:15px;top:15px;width:67px;height:63px"></div><div class="lb" style="top:-3px;height:97px;line-height:97px;font-size:59px;transform:scaleX(1.0)">1</div></div>
<div class="key" style="left:432px;top:655px;width:101px;height:97px"><div class="in" style="left:15px;top:15px;width:67px;height:63px"></div><div class="lb" style="top:-3px;height:97px;line-height:97px;font-size:59px;transform:scaleX(1.0)">2</div></div>
<div class="key" style="left:536px;top:655px;width:101px;height:97px"><div class="in" style="left:15px;top:15px;width:67px;height:63px"></div><div class="lb" style="top:-3px;height:97px;line-height:97px;font-size:59px;transform:scaleX(1.0)">3</div></div>
<div class="key" style="left:641px;top:655px;width:102px;height:97px"><div class="in" style="left:15px;top:15px;width:68px;height:63px"></div><div class="lb" style="top:-1.5px;height:97px;line-height:97px;font-size:46px;transform:scaleX(1.04)">DEL</div></div>
<div class="key" style="left:747px;top:655px;width:102px;height:97px"><div class="in" style="left:15px;top:15px;width:68px;height:63px"></div><svg class="a" style="left:27px;top:27px" width="48" height="39"><path d="M1 1h46L24 38z" fill="#000"/></svg></div>
<div class="key" style="left:327px;top:760px;width:206px;height:97px"><div class="in" style="left:15px;top:15px;width:172px;height:63px"></div><div class="lb" style="top:-3px;height:97px;line-height:97px;font-size:59px;transform:scaleX(1.0)">0</div></div>
<div class="key" style="left:536px;top:760px;width:101px;height:97px"><div class="in" style="left:15px;top:15px;width:67px;height:63px"></div><div class="lb" style="top:-3px;height:97px;line-height:97px;font-size:59px;transform:scaleX(1.0)">.</div></div>
<div class="key" style="left:641px;top:760px;width:208px;height:97px"><div class="in" style="left:15px;top:15px;width:174px;height:63px"></div><div class="lb" style="top:-1px;height:97px;line-height:97px;font-size:46px;transform:scaleX(0.95)">ENT</div></div>
<div class="a" style="left:1448px;top:97px;width:452px;height:22px;background:#efefef;border:1px solid #9c9c9c;border-radius:2px"></div>
<div class="t" style="left:1453px;top:99px;font-size:16px;line-height:18px">属性</div>
<svg class="a" style="left:1883px;top:101px" width="12" height="14" viewBox="0 0 12 14"><path d="M3 1h6v2H8v5h2v2H6.8v4H5.2v-4H2V8h2V3H3z" fill="#111"/></svg>
<div class="a" style="left:1449px;top:125px;width:445px;height:35px;background:#fff"></div>
<div class="t" style="left:1456px;top:133px;font-size:15px;line-height:18px">键盘注册</div>
<div class="a" style="left:1449px;top:164px;width:445px;height:35px;background:#fff"></div>
<svg class="a" style="left:1452px;top:168px" width="22" height="24" viewBox="0 0 22 24"><path d="M8 4h4v5h5v4h-5v5H8v-5H3V9h5z" fill="#9ccaca" stroke="#4a8080" stroke-width="1"/><text x="0" y="23" font-size="8" font-weight="bold" fill="#d02020" font-family="Liberation Sans">ALL</text></svg>
<svg class="a" style="left:1481px;top:168px" width="22" height="24" viewBox="0 0 22 24"><rect x="3" y="9" width="15" height="4" fill="#9ccaca" stroke="#4a8080" stroke-width="1"/><text x="0" y="23" font-size="8" font-weight="bold" fill="#d02020" font-family="Liberation Sans">ALL</text></svg>
<svg class="a" style="left:1511px;top:168px" width="14" height="22" viewBox="0 0 14 22"><path d="M2 5l6-4h3v20H7V6L3 8z" fill="#8fb8c0" stroke="#4a7880" stroke-width="1"/></svg>
<div class="a" style="left:1449px;top:208px;width:445px;height:682px;background:#fff;border:1px solid #7a7a7a;border-right:none"></div>
<div class="a" style="left:1450px;top:209px;width:444px;height:19px;background:#fefce0;border-bottom:1px solid #c8c8b0"></div>
<div class="a" style="left:1611px;top:209px;width:1px;height:19px;background:#c8c8b0"></div>
<div class="t" style="left:1454px;top:209px;font-size:15px;line-height:18px">属性名称</div>
<div class="t" style="left:1617px;top:209px;font-size:15px;line-height:18px">值</div>
<div class="a" style="left:1450px;top:229px;width:444px;height:19px;background:#0072d0"></div>
<svg class="a" style="left:1452px;top:232px" width="13" height="13" viewBox="0 0 13 13"><rect x=".5" y=".5" width="12" height="12" fill="#e8e8e8" stroke="#b0b0b0"/><path d="M3 6.5h7" stroke="#333" stroke-width="1.4"/></svg>
<div class="t" style="left:1469px;top:229px;font-size:15px;line-height:18px;color:#fff">键盘</div>
<div class="a" style="left:1450px;top:267px;width:444px;height:1px;background:#ececec"></div>
<div class="a" style="left:1611px;top:248px;width:1px;height:20px;background:#ececec"></div>
<div class="t" style="left:1486px;top:249px;font-size:15px;line-height:18px">编号</div>
<div class="t" style="left:1617px;top:250px;font-size:14px;line-height:17px">1</div>
<div class="a" style="left:1450px;top:287px;width:444px;height:1px;background:#ececec"></div>
<div class="a" style="left:1611px;top:268px;width:1px;height:20px;background:#ececec"></div>
<div class="t" style="left:1486px;top:269px;font-size:15px;line-height:18px">注释</div>
<div class="t" style="left:1617px;top:270px;font-size:14px;line-height:17px">西能自动化_18962034521</div>
<div class="a" style="left:1450px;top:307px;width:444px;height:1px;background:#ececec"></div>
<svg class="a" style="left:1452px;top:292px" width="13" height="13" viewBox="0 0 13 13"><rect x=".5" y=".5" width="12" height="12" fill="#fff" stroke="#a0a0a0"/><path d="M3 6.5h7" stroke="#555" stroke-width="1.2"/></svg>
<div class="t" style="left:1469px;top:289px;font-size:15px;line-height:18px">清除区域</div>
<div class="a" style="left:1450px;top:327px;width:444px;height:1px;background:#ececec"></div>
<div class="a" style="left:1611px;top:308px;width:1px;height:20px;background:#ececec"></div>
<div class="t" style="left:1486px;top:309px;font-size:15px;line-height:18px">清除区域</div>
<div class="t" style="left:1617px;top:310px;font-size:14px;line-height:17px">ON</div>
<div class="a" style="left:1450px;top:347px;width:444px;height:1px;background:#ececec"></div>
<div class="a" style="left:1611px;top:328px;width:1px;height:20px;background:#ececec"></div>
<div class="t" style="left:1486px;top:329px;font-size:15px;line-height:18px">左上X坐标</div>
<div class="t" style="left:1617px;top:330px;font-size:14px;line-height:17px">489</div>
<div class="a" style="left:1450px;top:367px;width:444px;height:1px;background:#ececec"></div>
<div class="a" style="left:1611px;top:348px;width:1px;height:20px;background:#ececec"></div>
<div class="t" style="left:1486px;top:349px;font-size:15px;line-height:18px">左上Y坐标</div>
<div class="t" style="left:1617px;top:350px;font-size:14px;line-height:17px">10</div>
<div class="a" style="left:1450px;top:387px;width:444px;height:1px;background:#ececec"></div>
<div class="a" style="left:1611px;top:368px;width:1px;height:20px;background:#ececec"></div>
<div class="t" style="left:1486px;top:369px;font-size:15px;line-height:18px">宽度</div>
<div class="t" style="left:1617px;top:370px;font-size:14px;line-height:17px">425</div>
<div class="a" style="left:1450px;top:407px;width:444px;height:1px;background:#ececec"></div>
<div class="a" style="left:1611px;top:388px;width:1px;height:20px;background:#ececec"></div>
<div class="t" style="left:1486px;top:389px;font-size:15px;line-height:18px">高度</div>
<div class="t" style="left:1617px;top:390px;font-size:14px;line-height:17px">553</div>
<div class="a" style="left:1449px;top:892px;width:445px;height:1px;background:#9c9c9c"></div>
<div class="a" style="left:1456px;top:892px;width:62px;height:27px;background:#fafafa;border:1px solid #9c9c9c;border-top:none"></div>
<svg class="a" style="left:1459px;top:897px" width="18" height="18" viewBox="0 0 18 18"><circle cx="9" cy="9" r="8" fill="#2a8ae0" stroke="#1060b0"/><circle cx="9" cy="9" r="5" fill="#8fd0ff"/><text x="9" y="13" text-anchor="middle" font-size="10" font-weight="bold" fill="#e0b020" font-family="Liberation Sans">P</text></svg>
<div class="t" style="left:1482px;top:896px;font-size:15px;line-height:18px">属性</div>
<svg class="a" style="left:1524px;top:896px" width="17" height="18" viewBox="0 0 17 18"><path d="M1 1h14M1 1v16" stroke="#555" stroke-width="1.4"/><path d="M4 16l11-11 2 2-11 11z" fill="#f0c040" stroke="#a07020" stroke-width=".8"/></svg>
<div class="t" style="left:1549px;top:896px;font-size:15px;line-height:18px;color:#8c8c8c">画面数据列表</div>
<div class="sep" style="left:1646px;top:897px;height:20px"></div>
<svg class="a" style="left:1652px;top:895px" width="19" height="20" viewBox="0 0 19 20"><rect x="2" y="6" width="15" height="13" rx="2" fill="#3a70b0" stroke="#1f4070"/><rect x="6" y="1" width="7" height="6" fill="#9fc8f0" stroke="#3a70b0"/><circle cx="7" cy="13" r="2.5" fill="#e04040"/><circle cx="12" cy="13" r="2.5" fill="#40c040"/></svg>
<div class="t" style="left:1677px;top:896px;font-size:15px;line-height:18px;color:#8c8c8c">部件工具箱</div>
<div class="sep" style="left:1757px;top:897px;height:20px"></div>
<svg class="a" style="left:1761px;top:898px" width="20" height="15" viewBox="0 0 20 15"><path d="M1 6l10-5 8 3v6l-10 5-8-3z" fill="#e8a830" stroke="#9a6a10" stroke-width=".8"/><path d="M1 6l8 3 10-5" fill="none" stroke="#9a6a10" stroke-width=".8"/></svg>
<div class="t" style="left:1786px;top:896px;font-size:15px;line-height:18px;color:#8c8c8c">包</div>
<div class="sep" style="left:1806px;top:897px;height:20px"></div>
<div class="a" style="left:0;top:921px;width:1894px;height:32px;background:#f3f3f3"></div>
<div class="a" style="left:95px;top:921px;width:1799px;height:32px;background:#f7f7f7"></div>
<div class="a" style="left:1px;top:926px;width:101px;height:28px;background:#f0f0f0;border:1px solid #a0a0a0;border-bottom:none"></div>
<svg class="a" style="left:5px;top:929px" width="19" height="19" viewBox="0 0 19 19"><rect x="2.5" y="1.5" width="14" height="12" fill="#fff" stroke="#1a2a70" stroke-width="1.5"/><rect x="2" y="1" width="15" height="3" fill="#1a2a70"/><path d="M1 13l3 4 8-9" fill="none" stroke="#a01010" stroke-width="2"/></svg>
<div class="t" style="left:34px;top:930px;font-size:15px;line-height:18px;color:#333">错误检查</div>
<div class="a" style="left:0;top:953px;width:1894px;height:33px;background:linear-gradient(#fafafa,#f2f2f2);border-bottom:1px solid #dcdcdc"></div>
<div class="a" style="left:3px;top:958px;width:2px;height:2px;background:#b0b0b0"></div>
<div class="a" style="left:3px;top:962px;width:2px;height:2px;background:#b0b0b0"></div>
<div class="a" style="left:3px;top:966px;width:2px;height:2px;background:#b0b0b0"></div>
<div class="a" style="left:3px;top:970px;width:2px;height:2px;background:#b0b0b0"></div>
<div class="a" style="left:3px;top:974px;width:2px;height:2px;background:#b0b0b0"></div>
<div class="a" style="left:14px;top:959px;width:31px;height:19px;background:#d6e6f4"></div>
<div class="t" style="left:17px;top:961px;font-size:15px;line-height:17px;color:#1a1a1a">F1</div>
<div class="t" style="left:48px;top:958px;font-size:15px;line-height:17px;color:#1a1a1a">手册</div>
<div class="a" style="left:170px;top:959px;width:31px;height:19px;background:#dedede"></div>
<div class="t" style="left:173px;top:961px;font-size:15px;line-height:17px;color:#9a9a9a">F2</div>
<div class="t" style="left:204px;top:958px;font-size:15px;line-height:17px;color:#9a9a9a">编辑文本</div>
<div class="a" style="left:327px;top:959px;width:31px;height:19px;background:#dedede"></div>
<div class="t" style="left:330px;top:961px;font-size:15px;line-height:17px;color:#9a9a9a">F3</div>
<div class="a" style="left:483px;top:959px;width:31px;height:19px;background:#dedede"></div>
<div class="t" style="left:486px;top:961px;font-size:15px;line-height:17px;color:#9a9a9a">F4</div>
<div class="a" style="left:639px;top:959px;width:31px;height:19px;background:#d6e6f4"></div>
<div class="t" style="left:642px;top:961px;font-size:15px;line-height:17px;color:#1a1a1a">F5</div>
<div class="t" style="left:673px;top:958px;font-size:15px;line-height:17px;color:#1a1a1a">下一个部件</div>
<div class="a" style="left:796px;top:959px;width:31px;height:19px;background:#dedede"></div>
<div class="t" style="left:799px;top:961px;font-size:15px;line-height:17px;color:#9a9a9a">F6</div>
<div class="t" style="left:830px;top:958px;font-size:15px;line-height:17px;color:#9a9a9a">上一个部件</div>
<div class="a" style="left:952px;top:959px;width:31px;height:19px;background:#d6e6f4"></div>
<div class="t" style="left:955px;top:961px;font-size:15px;line-height:17px;color:#1a1a1a">F7</div>
<div class="t" style="left:986px;top:958px;font-size:15px;line-height:17px;color:#1a1a1a">下一个绘图</div>
<div class="a" style="left:1108px;top:959px;width:31px;height:19px;background:#dedede"></div>
<div class="t" style="left:1111px;top:961px;font-size:15px;line-height:17px;color:#9a9a9a">F8</div>
<div class="t" style="left:1142px;top:958px;font-size:15px;line-height:17px;color:#9a9a9a">上一个绘图</div>
<div class="a" style="left:1264px;top:959px;width:31px;height:19px;background:#dedede"></div>
<div class="t" style="left:1267px;top:961px;font-size:15px;line-height:17px;color:#9a9a9a">F9</div>
<div class="t" style="left:1298px;top:958px;font-size:15px;line-height:17px;color:#9a9a9a">属性更改</div>
<div class="a" style="left:1421px;top:959px;width:31px;height:19px;background:#d6e6f4"></div>
<div class="t" style="left:1424px;top:961px;font-size:15px;line-height:17px;color:#1a1a1a">F10</div>
<div class="t" style="left:1455px;top:958px;font-size:15px;line-height:17px;color:#1a1a1a">菜单</div>
<div class="a" style="left:1577px;top:959px;width:31px;height:19px;background:#d6e6f4"></div>
<div class="t" style="left:1580px;top:961px;font-size:15px;line-height:17px;color:#1a1a1a">F11</div>
<div class="t" style="left:1611px;top:958px;font-size:15px;line-height:17px;color:#1a1a1a">全屏</div>
<div class="a" style="left:1733px;top:959px;width:31px;height:19px;background:#d6e6f4"></div>
<div class="t" style="left:1736px;top:961px;font-size:15px;line-height:17px;color:#1a1a1a">F12</div>
<div class="t" style="left:1767px;top:958px;font-size:15px;line-height:17px;color:#1a1a1a">模拟</div>
<div class="a" style="left:0;top:987px;width:1894px;height:25px;background:#f0f0f0"></div>
<div class="sep" style="left:1297px;top:989px;height:22px"></div>
<div class="sep" style="left:1596px;top:989px;height:22px"></div>
<div class="sep" style="left:1722px;top:989px;height:22px"></div>
<svg class="a" style="left:1310px;top:992px" width="16" height="16" viewBox="0 0 16 16"><rect x="1" y="1" width="14" height="14" rx="3" fill="#333"/><rect x="4" y="7" width="8" height="2.2" fill="#fff"/></svg>
<svg class="a" style="left:1332px;top:990px" width="128" height="20" viewBox="0 0 128 20"><rect x="1" y="1" width="126" height="4" fill="#d8d8d8" stroke="#a8a8a8" stroke-width=".8"/><rect x="4.0" y="9" width="3" height="5" fill="#222"/><rect x="13.3" y="9" width="3" height="5" fill="#222"/><rect x="22.6" y="9" width="3" height="5" fill="#222"/><rect x="31.9" y="9" width="3" height="5" fill="#222"/><rect x="41.2" y="9" width="3" height="5" fill="#bbb"/><rect x="50.5" y="9" width="3" height="5" fill="#bbb"/><rect x="59.8" y="9" width="3" height="5" fill="#222"/><rect x="69.1" y="9" width="3" height="5" fill="#bbb"/><rect x="78.4" y="9" width="3" height="5" fill="#bbb"/><rect x="87.7" y="9" width="3" height="5" fill="#222"/><rect x="97.0" y="9" width="3" height="5" fill="#222"/><rect x="106.3" y="9" width="3" height="5" fill="#222"/><rect x="115.6" y="9" width="3" height="5" fill="#222"/><rect x="124.9" y="9" width="3" height="5" fill="#222"/><rect x="60" y="6" width="8" height="13" rx="3" fill="#f0f0f0" stroke="#333" stroke-width="1.5"/></svg>
<svg class="a" style="left:1467px;top:992px" width="16" height="16" viewBox="0 0 16 16"><rect x="1" y="1" width="14" height="14" rx="3" fill="#333"/><path d="M4 8h8M8 4v8" stroke="#fff" stroke-width="2.2"/></svg>
<div class="a" style="left:1490px;top:989px;width:102px;height:21px;background:#d4d4d4;border:1px solid #9a9a9a"></div>
<div class="t" style="left:1609px;top:987px;font-size:17px;line-height:20px;color:#222">+</div>
<div class="t" style="left:1635px;top:992px;font-size:13px;line-height:16px;color:#333;font-family:'Liberation Mono',monospace">----,----</div>
<div class="t" style="left:1727px;top:992px;font-size:12.5px;line-height:16px;color:#222;font-family:'Liberation Mono',monospace">ET-6700WA FWXGA (1366*</div>
</body></html>
